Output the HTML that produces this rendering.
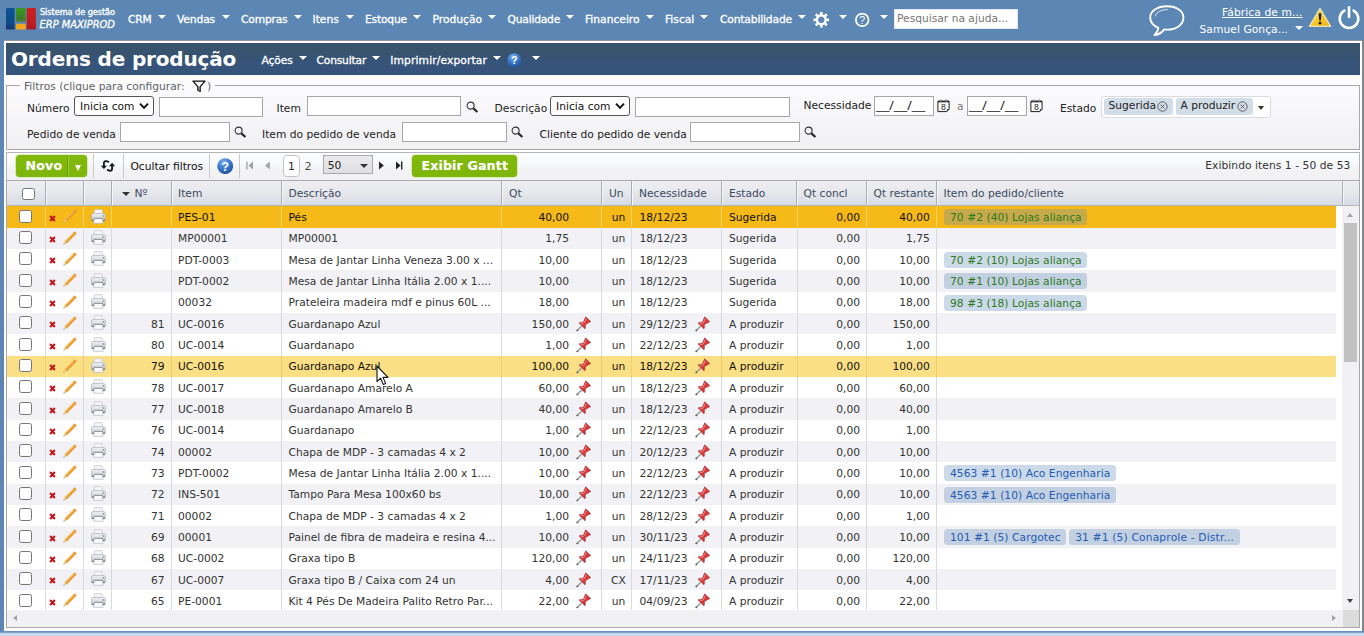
<!DOCTYPE html>
<html lang="pt-BR"><head><meta charset="utf-8"><title>Ordens de produção</title>
<style>
*{box-sizing:border-box;margin:0;padding:0}
html,body{width:1364px;height:636px;overflow:hidden}
body{position:relative;background:#5c87b5;font-family:"DejaVu Sans","Liberation Sans",sans-serif;font-size:10.7px;color:#333}
.abs{position:absolute}
.t{position:absolute;white-space:nowrap}
.cond{font-family:"DejaVu Sans Condensed","Liberation Sans",sans-serif}
#nav{position:absolute;left:0;top:0;width:1364px;height:40px;background:#5c87b5;color:#fff}
#nav .mi{-webkit-text-stroke:.3px #fff;position:absolute;top:.9px;line-height:38px;color:#fff;white-space:nowrap}
.arw{position:absolute;width:0;height:0;border-left:4.5px solid transparent;border-right:4.5px solid transparent;border-top:4.5px solid #fff}
#frame{position:absolute;left:4px;top:40px;width:1358px;height:591px;background:#fff;border-top:1px solid #8d95a2}
#edgeR{position:absolute;left:1362px;top:40px;width:2px;height:596px;background:#80868c}
#bottom{position:absolute;left:0;top:631px;width:1364px;height:5px;background:linear-gradient(#5c87b5 0,#7fa2c9 30%,#c6d7ec 50%,#c9daee 100%)}
#title{position:absolute;left:6px;top:43px;width:1354px;height:32px;background:linear-gradient(#38526b 0,#37536f 35%,#36537a 60%,#36547b 100%);color:#fff}
#title h1{position:absolute;left:5px;top:0;font-family:"DejaVu Sans","Liberation Sans",sans-serif;font-weight:bold;font-size:20px;line-height:32px;letter-spacing:-0.18px;white-space:nowrap}
#title .mi{-webkit-text-stroke:.3px #fff;position:absolute;top:1.8px;line-height:32px;white-space:nowrap}
#filters{position:absolute;left:6px;top:75px;width:1354px;height:75px;background:linear-gradient(#fdfdfe 0,#f8f8fa 40%,#f0f0f3 100%)}
#fs{position:absolute;left:0;top:10px;width:1354px;height:65px;border:1px solid #a9a9ad}
#legend{position:absolute;left:14px;top:4px;height:14px;width:195px;background:#fbfbfc}
.lbl{position:absolute;white-space:nowrap;line-height:16px;color:#222}
.inp{position:absolute;background:#fff;border:1px solid #a6a6a6;height:20px}
.sel{position:absolute;background:#fff;border:1px solid #555;border-radius:3px;height:20px;width:80px;line-height:19px;padding-left:5px;color:#111}
#toolbar{position:absolute;left:6px;top:152px;width:1354px;height:28px;background:linear-gradient(#fcfdfe 0,#f9fafb 35%,#f3f3f5 60%,#f1f1f3 100%);border-top:1px solid #b5b5b8;border-left:1px solid #b5b5b8;border-right:1px solid #b5b5b8}
.sep{position:absolute;top:1px;width:1px;height:24px;background:#c9c9cc}
.gbtn{position:absolute;background:linear-gradient(#81ba0d,#7db609);border-radius:3.5px;box-shadow:0 0 0 .6px rgba(190,220,110,.8);color:#fff;font-family:"DejaVu Sans","Liberation Sans",sans-serif;font-weight:bold;font-size:12.6px;letter-spacing:.16px;line-height:21.4px;height:22.4px;text-shadow:0 0 1px rgba(255,255,255,.35)}
#grid{position:absolute;left:6px;top:181px;width:1354px;height:447px;border:1px solid #a9a9ad;border-top:none;background:#fff}
#ghead{position:absolute;left:6px;top:180px;width:1354px;height:26px;background:linear-gradient(#efeff2 0,#e7e8ec 45%,#d7dbe3 100%);border-top:1px solid #a9aaae;border-bottom:1px solid #b4b5ba;border-left:1px solid #a9a9ad;border-right:1px solid #a9a9ad;color:#3c4a5e}
#ghead .h{position:absolute;top:1px;line-height:23px;white-space:nowrap}
#ghead .vs{position:absolute;top:0;width:2px;height:24px;border-left:1px solid #abadb5;border-right:1px solid #f6f6f9}
#rows{position:absolute;left:7px;top:206px;width:1329px;height:404px;overflow:hidden}
.r{position:absolute;left:0;width:1329px;height:21.34px;line-height:21.33px}
.r{--sc:#d9dade;background-image:linear-gradient(var(--sc),var(--sc)),linear-gradient(var(--sc),var(--sc)),linear-gradient(var(--sc),var(--sc)),linear-gradient(var(--sc),var(--sc)),linear-gradient(var(--sc),var(--sc)),linear-gradient(var(--sc),var(--sc)),linear-gradient(var(--sc),var(--sc)),linear-gradient(var(--sc),var(--sc)),linear-gradient(var(--sc),var(--sc)),linear-gradient(var(--sc),var(--sc)),linear-gradient(var(--sc),var(--sc)),linear-gradient(var(--sc),var(--sc));background-size:1px 100%;background-repeat:no-repeat;background-position:38px 0,76px 0,104px 0,164px 0,274px 0,494px 0,594px 0,624px 0,714px 0,790px 0,859px 0,929px 0}
.r.on{--sc:#f9d662}
.r.hov{--sc:#efcf70}
.r.alt{background-color:#f2f2f6}
.r.on{background-color:#f5b918;color:#111}
.r.hov{background-color:#fadf85;color:#111}
.c{position:absolute;top:.6px;white-space:nowrap}
.ra{text-align:right}
.vl{position:absolute;top:206px;width:1px;height:404px;background:#d9dade}
.cb{position:absolute;left:11.6px;top:3.4px;width:13px;height:13px;border:1px solid #767676;border-radius:2.5px;background:#fff}
.chip{position:absolute;top:3px;height:16px;line-height:17px;border-radius:3.5px;background:rgba(96,136,183,.32);padding:0 5.5px 0 6px;letter-spacing:.05px}
.chip.g{color:#2c7a1e}
.chip.b{color:#235cb4}
.r svg{position:absolute}
#vscroll{position:absolute;left:1342px;top:206px;width:17px;height:404px;background:#f1f1f3}
#hscroll{position:absolute;left:7px;top:610px;width:1352px;height:17px;background:#f1f1f3}
</style></head>
<body>
<div id="nav">
<svg class="abs" style="left:6px;top:8px" width="30" height="22" viewBox="0 0 30 22"><defs><linearGradient id="lb" x1="0" y1="0" x2="0" y2="1"><stop offset="0" stop-color="#0a5592"/><stop offset=".7" stop-color="#0d4a86"/><stop offset="1" stop-color="#17366d"/></linearGradient><linearGradient id="lg" x1="0" y1="0" x2="0" y2="1"><stop offset="0" stop-color="#3a9a1c"/><stop offset=".5" stop-color="#3f8a26"/><stop offset="1" stop-color="#58792f"/></linearGradient><linearGradient id="lr" x1="0" y1="0" x2="0" y2="1"><stop offset="0" stop-color="#c8201f"/><stop offset=".8" stop-color="#bd1d1f"/><stop offset="1" stop-color="#a3191f"/></linearGradient></defs><rect x="0" y="0" width="8.6" height="21.6" rx="1.2" fill="url(#lb)"/><rect x="10" y="0" width="9.7" height="13.8" rx="1.2" fill="url(#lg)"/><rect x="11.5" y="7" width="5.5" height="5" fill="#2f7a2a" opacity=".6"/><rect x="10" y="15.8" width="9.7" height="5.8" rx="1" fill="#f0a71d"/><rect x="20.7" y="0" width="9.2" height="21.6" rx="1.2" fill="url(#lr)"/></svg>
<div class="t cond" style="left:40px;top:7px;font-size:9px;line-height:11px;color:#fff;-webkit-text-stroke:.35px #fff;letter-spacing:-.02px">Sistema de gestão</div>
<div class="t cond" style="left:39.5px;top:17.6px;font-size:11px;line-height:13px;font-style:italic;color:#fff;-webkit-text-stroke:.3px #fff">ERP MAXIPROD</div>
<div class="mi" style="left:128.0px;letter-spacing:-0.2px">CRM</div><i class="arw" style="left:158.2px;top:15px"></i>
<div class="mi" style="left:177.0px;letter-spacing:-0.12px">Vendas</div><i class="arw" style="left:221.7px;top:15px"></i>
<div class="mi" style="left:241.0px;letter-spacing:-0.17px">Compras</div><i class="arw" style="left:294.2px;top:15px"></i>
<div class="mi" style="left:312.5px">Itens</div><i class="arw" style="left:346.2px;top:15px"></i>
<div class="mi" style="left:365.0px;letter-spacing:-0.17px">Estoque</div><i class="arw" style="left:412.7px;top:15px"></i>
<div class="mi" style="left:432.5px">Produção</div><i class="arw" style="left:488.2px;top:15px"></i>
<div class="mi" style="left:507.5px;letter-spacing:-0.2px">Qualidade</div><i class="arw" style="left:566.2px;top:15px"></i>
<div class="mi" style="left:585.0px">Financeiro</div><i class="arw" style="left:646.2px;top:15px"></i>
<div class="mi" style="left:665.0px">Fiscal</div><i class="arw" style="left:700.2px;top:15px"></i>
<div class="mi" style="left:720.0px;letter-spacing:-0.15px">Contabilidade</div><i class="arw" style="left:798.2px;top:15px"></i>
<svg class="abs" style="left:813px;top:12px" width="17" height="16" viewBox="0 0 17 16"><path d="M6.94,0.02 L9.66,0.02 L9.61,2.35 L11.23,3.03 L12.84,1.34 L14.76,3.26 L13.07,4.87 L13.75,6.49 L16.08,6.44 L16.08,9.16 L13.75,9.11 L13.07,10.73 L14.76,12.34 L12.84,14.26 L11.23,12.57 L9.61,13.25 L9.66,15.58 L6.94,15.58 L6.99,13.25 L5.37,12.57 L3.76,14.26 L1.84,12.34 L3.53,10.73 L2.85,9.11 L0.52,9.16 L0.52,6.44 L2.85,6.49 L3.53,4.87 L1.84,3.26 L3.76,1.34 L5.37,3.03 L6.99,2.35Z M8.3,4.6 a3.2,3.2 0 1 0 0.001,0Z" fill="#fff" fill-rule="evenodd"/></svg><i class="arw" style="left:838.6px;top:15px"></i>
<svg class="abs" style="left:854px;top:12px" width="17" height="16" viewBox="0 0 17 16"><circle cx="8.2" cy="7.9" r="6.3" fill="none" stroke="#fff" stroke-width="1.7"/><text x="8.2" y="11.6" text-anchor="middle" font-family="Liberation Sans, sans-serif" font-size="10.5" fill="#fff">?</text></svg><i class="arw" style="left:879.5px;top:15px"></i>
<div class="abs" style="left:894px;top:9px;width:124px;height:20px;background:#fff;border:1px solid #e4e8ee;color:#767676;line-height:18px;padding-left:2px;white-space:nowrap">Pesquisar na ajuda...</div>
<svg class="abs" style="left:1147px;top:3px" width="40" height="36" viewBox="0 0 40 36"><path d="M20,3.2 C10.2,3.2 3.2,8 3.2,14.6 C3.2,19.2 6.4,22.9 11.4,24.8 C11.1,27.5 9.6,30 7.4,32.2 C11.8,31.6 15.2,29.4 17.2,26.4 C18.1,26.5 19,26.6 20,26.6 C29.8,26.6 36.4,21.4 36.4,14.6 C36.4,8 29.8,3.2 20,3.2Z" fill="none" stroke="#fff" stroke-width="1.9" stroke-linejoin="round"/><path d="M8.2,13.2 C9.6,9 14.6,6.6 20.6,6.6" fill="none" stroke="#fff" stroke-width="1" opacity=".85"/></svg>
<div class="t" style="left:1222px;top:4.5px;line-height:15px;color:#fff;text-decoration:underline;letter-spacing:.1px">Fábrica de m...</div>
<div class="t" style="left:1199.5px;top:22px;line-height:15px;color:#fff;letter-spacing:.06px">Samuel Gonça...</div>
<i class="arw" style="left:1295px;top:25.5px;border-left-width:4px;border-right-width:4px"></i>
<svg class="abs" style="left:1308px;top:7px" width="24" height="21" viewBox="0 0 24 21"><defs><linearGradient id="wg" x1="0" y1="0" x2="1" y2="1"><stop offset="0" stop-color="#ffe24a"/><stop offset="1" stop-color="#f2b20c"/></linearGradient></defs><path d="M12,1.4 L22.6,19.4 L1.4,19.4Z" fill="url(#wg)" stroke="#e9e0c0" stroke-width="1.3" stroke-linejoin="round"/><path d="M10.7,6.2 h2.6 l-.5,7.2 h-1.6Z" fill="#1c1c1c"/><circle cx="12" cy="16.1" r="1.5" fill="#1c1c1c"/></svg>
<svg class="abs" style="left:1337px;top:5px" width="24" height="25" viewBox="0 0 24 25"><path d="M7.4,5.6 A9.3,9.3 0 1 0 16.6,5.6" fill="none" stroke="#fff" stroke-width="2.6" stroke-linecap="round"/><path d="M12,2.2 V12" stroke="#fff" stroke-width="2.6" stroke-linecap="round"/></svg>
</div>
<div id="frame"></div><div id="edgeR"></div><div id="bottom"></div>
<div id="title"><h1>Ordens de produção</h1>
<div class="mi" style="left:255.5px;letter-spacing:-0.07px">Ações</div><i class="arw" style="left:292.5px;top:13px"></i>
<div class="mi" style="left:310.5px;letter-spacing:-0.18px">Consultar</div><i class="arw" style="left:366.4px;top:13px"></i>
<div class="mi" style="left:384.3px;letter-spacing:0.12px">Imprimir/exportar</div><i class="arw" style="left:486.7px;top:13px"></i>
<div class="abs" style="left:500.8px;top:10.2px;width:15px;height:15px"><svg width="14.6" height="14.6" viewBox="0 0 16 16"><defs><radialGradient id="hs1" cx=".4" cy=".25" r=".8"><stop offset="0" stop-color="#7fb2ee"/><stop offset=".45" stop-color="#3f7fd0"/><stop offset="1" stop-color="#1b4f9e"/></radialGradient></defs><circle cx="8" cy="8" r="7.7" fill="url(#hs1)"/><text x="8" y="12.3" text-anchor="middle" font-family="Liberation Sans, sans-serif" font-weight="bold" font-size="12" fill="#fff">?</text></svg></div><i class="arw" style="left:525.7px;top:13px"></i>
</div>
<div id="filters"><div id="fs"></div>
<div id="legend"></div><div class="lbl" style="left:18px;top:3.6px;color:#5f6368">Filtros (clique para configurar:</div><svg class="abs" style="left:185.5px;top:4.5px" width="14" height="13" viewBox="0 0 14 13"><path d="M1,1.1 H13 L8.2,6.6 V11.4 L5.8,10.2 V6.6Z" fill="none" stroke="#111" stroke-width="1.3" stroke-linejoin="round"/><path d="M5.9,6.8 H8.1 V11.2 L5.9,10.1Z" fill="#777"/></svg><div class="lbl" style="left:201px;top:3.6px;color:#5f6368">)</div>
<div class="lbl" style="left:21px;top:25.599999999999994px">Número</div><div class="sel" style="left:68px;top:21px">Inicia com<svg class="abs" style="right:4px;top:5px" width="10" height="8" viewBox="0 0 10 8"><path d="M1,1.6 L5,5.8 L9,1.6" fill="none" stroke="#111" stroke-width="1.9"/></svg></div><div class="inp" style="left:153px;top:22px;width:104px;height:20px"></div><div class="lbl" style="left:270.5px;top:25.599999999999994px">Item</div><div class="inp" style="left:301px;top:21px;width:154px;height:20px"></div><svg class="abs" style="left:459.6px;top:25.799999999999997px" width="13" height="13" viewBox="0 0 13 13"><circle cx="4.6" cy="4.6" r="3.5" fill="none" stroke="#333" stroke-width="1.1"/><path d="M7.4,7.4 L11.4,11" stroke="#222" stroke-width="2.1" stroke-linecap="butt"/></svg><div class="lbl" style="left:488.6px;top:25.599999999999994px">Descrição</div><div class="sel" style="left:544px;top:21px">Inicia com<svg class="abs" style="right:4px;top:5px" width="10" height="8" viewBox="0 0 10 8"><path d="M1,1.6 L5,5.8 L9,1.6" fill="none" stroke="#111" stroke-width="1.9"/></svg></div><div class="inp" style="left:629px;top:22px;width:155px;height:20px"></div><div class="lbl" style="left:797.5px;top:22.599999999999994px">Necessidade</div><div class="inp" style="left:868px;top:21px;width:60px;height:20px"></div><div class="lbl" style="left:870.4px;top:23px;transform:scaleX(1.25);transform-origin:0 0">__/__/__</div><svg class="abs" style="left:931px;top:24.4px" width="13" height="14" viewBox="0 0 13 14"><path d="M.9,2.4 H12.1 V10.2 L9.8,12.6 H.9Z" fill="#fff" stroke="#1f1f1f" stroke-width="1"/><path d="M.9,2.5 H12.1" stroke="#1f1f1f" stroke-width="1.6"/><circle cx="3.8" cy="1.9" r=".95" fill="#fff" stroke="#1f1f1f" stroke-width=".6"/><circle cx="9.2" cy="1.9" r=".95" fill="#fff" stroke="#1f1f1f" stroke-width=".6"/><path d="M9.8,12.6 V10.2 H12.1Z" fill="#1f1f1f"/><text x="6.4" y="10.7" text-anchor="middle" font-family="Liberation Sans, sans-serif" font-size="8.6" fill="#222">8</text></svg><div class="lbl" style="left:951px;top:23.599999999999994px;color:#777">a</div><div class="inp" style="left:961px;top:21px;width:60px;height:20px"></div><div class="lbl" style="left:962.8px;top:23px;transform:scaleX(1.25);transform-origin:0 0">__/__/__</div><svg class="abs" style="left:1023.5999999999999px;top:24.4px" width="13" height="14" viewBox="0 0 13 14"><path d="M.9,2.4 H12.1 V10.2 L9.8,12.6 H.9Z" fill="#fff" stroke="#1f1f1f" stroke-width="1"/><path d="M.9,2.5 H12.1" stroke="#1f1f1f" stroke-width="1.6"/><circle cx="3.8" cy="1.9" r=".95" fill="#fff" stroke="#1f1f1f" stroke-width=".6"/><circle cx="9.2" cy="1.9" r=".95" fill="#fff" stroke="#1f1f1f" stroke-width=".6"/><path d="M9.8,12.6 V10.2 H12.1Z" fill="#1f1f1f"/><text x="6.4" y="10.7" text-anchor="middle" font-family="Liberation Sans, sans-serif" font-size="8.6" fill="#222">8</text></svg><div class="lbl" style="left:1054px;top:25.599999999999994px">Estado</div><div class="abs" style="left:1094.5px;top:20.5px;width:170px;height:22px;background:#fff;border:1px solid #dadbe0;border-radius:3px"></div><div class="abs" style="left:1097.5px;top:23px;width:69.0px;height:16.5px;background:#d3dde8;border-radius:3px;line-height:16px;padding-left:5px;white-space:nowrap;color:#222">Sugerida<svg class="abs" style="right:4.5px;top:2.6px" width="11" height="11" viewBox="0 0 11 11"><circle cx="5.5" cy="5.5" r="4.7" fill="none" stroke="#555" stroke-width=".9"/><path d="M3.6,3.6 L7.4,7.4 M7.4,3.6 L3.6,7.4" stroke="#555" stroke-width=".9"/></svg></div><div class="abs" style="left:1169.5px;top:23px;width:77.0px;height:16.5px;background:#d3dde8;border-radius:3px;line-height:16px;padding-left:5px;white-space:nowrap;color:#222">A produzir<svg class="abs" style="right:4.5px;top:2.6px" width="11" height="11" viewBox="0 0 11 11"><circle cx="5.5" cy="5.5" r="4.7" fill="none" stroke="#555" stroke-width=".9"/><path d="M3.6,3.6 L7.4,7.4 M7.4,3.6 L3.6,7.4" stroke="#555" stroke-width=".9"/></svg></div><i class="arw" style="left:1252.3px;top:30.599999999999994px;border-left-width:3.5px;border-right-width:3.5px;border-top:4px solid #333"></i>
<div class="lbl" style="left:21px;top:51.599999999999994px">Pedido de venda</div><div class="inp" style="left:114px;top:47px;width:109.5px;height:20px"></div><svg class="abs" style="left:227.8px;top:50.8px" width="13" height="13" viewBox="0 0 13 13"><circle cx="4.6" cy="4.6" r="3.5" fill="none" stroke="#333" stroke-width="1.1"/><path d="M7.4,7.4 L11.4,11" stroke="#222" stroke-width="2.1" stroke-linecap="butt"/></svg><div class="lbl" style="left:256px;top:51.599999999999994px">Item do pedido de venda</div><div class="inp" style="left:396px;top:47px;width:105px;height:20px"></div><svg class="abs" style="left:505.3px;top:50.8px" width="13" height="13" viewBox="0 0 13 13"><circle cx="4.6" cy="4.6" r="3.5" fill="none" stroke="#333" stroke-width="1.1"/><path d="M7.4,7.4 L11.4,11" stroke="#222" stroke-width="2.1" stroke-linecap="butt"/></svg><div class="lbl" style="left:533.5px;top:51.599999999999994px">Cliente do pedido de venda</div><div class="inp" style="left:684px;top:47px;width:110px;height:20px"></div><svg class="abs" style="left:798.3px;top:50.8px" width="13" height="13" viewBox="0 0 13 13"><circle cx="4.6" cy="4.6" r="3.5" fill="none" stroke="#333" stroke-width="1.1"/><path d="M7.4,7.4 L11.4,11" stroke="#222" stroke-width="2.1" stroke-linecap="butt"/></svg></div>
<div id="toolbar">
<div class="gbtn" style="left:9px;top:2px;width:71px;padding-left:9.5px">Novo<i class="abs" style="left:51px;top:1px;width:1px;height:21px;background:rgba(60,110,0,.35)"></i><i class="abs" style="left:52px;top:1px;width:1px;height:21px;background:rgba(255,255,255,.25)"></i><i class="arw" style="left:58.5px;top:9.5px;border-left-width:3.2px;border-right-width:3.2px;border-top-width:6px"></i></div>
<i class="sep" style="left:86.19999999999999px"></i><i class="sep" style="left:116.1px"></i><i class="sep" style="left:202.0px"></i><i class="sep" style="left:231.79999999999998px"></i><svg class="abs" style="left:93px;top:7px" width="16" height="12" viewBox="0 0 16 12"><path d="M8.9,2.3 Q7.2,1 5.3,1.2 Q3.9,1.5 3.9,3.2 V6.4" fill="none" stroke="#1a1a1a" stroke-width="1.9"/><path d="M.8,5.7 H7 L3.9,9.1Z" fill="#1a1a1a"/><path d="M7.1,9.6 Q8.8,11 10.7,10.7 Q12.1,10.4 12.1,8.8 V5.6" fill="none" stroke="#1a1a1a" stroke-width="1.9"/><path d="M9,6.2 H15.2 L12.1,2.7Z" fill="#1a1a1a"/></svg><div class="t" style="left:123.4px;top:1px;line-height:26px;color:#111">Ocultar filtros</div><div class="abs" style="left:209.8px;top:4.6px;width:17px;height:17px"><svg width="16.4" height="16.4" viewBox="0 0 16 16"><defs><radialGradient id="hs2" cx=".4" cy=".25" r=".8"><stop offset="0" stop-color="#7fb2ee"/><stop offset=".45" stop-color="#3f7fd0"/><stop offset="1" stop-color="#1b4f9e"/></radialGradient></defs><circle cx="8" cy="8" r="7.7" fill="url(#hs2)"/><text x="8" y="12.3" text-anchor="middle" font-family="Liberation Sans, sans-serif" font-weight="bold" font-size="12" fill="#fff">?</text></svg></div>
<svg class="abs" style="left:238.6px;top:8.2px" width="8" height="9" viewBox="0 0 8 9"><path d="M.9,.5 V8.5" stroke="#a2a2a6" stroke-width="1.4"/><path d="M7,.5 V8.5 L2.4,4.5Z" fill="#a2a2a6"/></svg><svg class="abs" style="left:256.6px;top:8.2px" width="7" height="9" viewBox="0 0 7 9"><path d="M5.8,.5 V8.5 L1,4.5Z" fill="#a2a2a6"/></svg><div class="abs" style="left:276px;top:1.6px;width:16.6px;height:22px;border:1px solid #c4c4c8;border-radius:4px;background:#fff;text-align:center;line-height:21.6px;color:#222">1</div><div class="t" style="left:297.8px;top:1.2px;line-height:26.5px;color:#444">2</div><div class="abs" style="left:315.6px;top:2px;width:50.4px;height:19px;border:1px solid #a9a9ad;background:linear-gradient(#ebebed,#dfdfe2);line-height:20px;padding-left:4.2px;color:#222">50<i class="arw" style="left:36.6px;top:7.8px;border-left-width:4.3px;border-right-width:4.3px;border-top:4.4px solid #333"></i></div><svg class="abs" style="left:371.4px;top:8.2px" width="7" height="9" viewBox="0 0 7 9"><path d="M1,.5 V8.5 L5.8,4.5Z" fill="#222"/></svg><svg class="abs" style="left:388.4px;top:8.2px" width="8" height="9" viewBox="0 0 8 9"><path d="M1,.5 V8.5 L5.6,4.5Z" fill="#222"/><path d="M6.7,.5 V8.5" stroke="#222" stroke-width="1.4"/></svg><div class="gbtn" style="left:405.2px;top:2px;width:104.8px;padding-left:9.2px">Exibir Gantt</div>
<div class="t" style="right:8.6px;top:1px;line-height:24px;color:#333;letter-spacing:.06px">Exibindo itens 1 - 50 de 53</div>
</div>
<div id="grid"></div>
<div id="ghead">
<i class="vs" style="left:37.9px"></i><i class="vs" style="left:75.9px"></i><i class="vs" style="left:104.10000000000001px"></i><i class="vs" style="left:163.9px"></i><i class="vs" style="left:274.09999999999997px"></i><i class="vs" style="left:493.9px"></i><i class="vs" style="left:594.1px"></i><i class="vs" style="left:624.4px"></i><i class="vs" style="left:714.4px"></i><i class="vs" style="left:789.4px"></i><i class="vs" style="left:859.1px"></i><i class="vs" style="left:928.9px"></i><i class="vs" style="left:1335.0px"></i><i class="cb" style="left:15px;top:6.5px;width:12.5px;height:12.5px"></i><i class="arw" style="left:115px;top:11px;border-left-width:4px;border-right-width:4px;border-top:4.4px solid #333"></i><div class="h" style="left:127.5px">Nº</div><div class="h" style="left:171.0px">Item</div><div class="h" style="left:281.5px">Descrição</div><div class="h" style="left:502.0px">Qt</div><div class="h" style="left:602.0px">Un</div><div class="h" style="left:632.0px">Necessidade</div><div class="h" style="left:722.0px">Estado</div><div class="h" style="left:796.5px">Qt concl</div><div class="h" style="left:866.5px">Qt restante</div><div class="h" style="left:936.5px">Item do pedido/cliente</div></div>
<div id="rows">
<div class="r on" style="top:0.40px"><i class="cb"></i><svg style="left:42.3px;top:8.2px" width="7" height="7" viewBox="0 0 7 7"><path d="M1.1,1.1 L5.9,5.9 M5.9,1.1 L1.1,5.9" stroke="#c3161c" stroke-width="2.1"/></svg><svg style="left:55.7px;top:2.8px" width="14" height="14" viewBox="0 0 14 14"><path d="M.5,13.5 L1.6,10.4 L3.6,12.4Z" fill="#f3d9ad"/><path d="M.5,13.5 L.95,12.3 L1.7,13.05Z" fill="#333"/><path d="M1.6,10.4 L11.4,.6 L13.4,2.6 L3.6,12.4Z" fill="#f0a02e"/><path d="M2.1,10.6 L11.8,.9" stroke="#f8c877" stroke-width=".9"/><path d="M3.3,12 L13,2.3" stroke="#de8d22" stroke-width=".8"/><path d="M10.7,1.3 L11.4,.6 L13.4,2.6 L12.7,3.3Z" fill="#e58c3a"/></svg><svg style="left:83.8px;top:2.4px" width="15" height="15.4" viewBox="0 0 16 16" preserveAspectRatio="none"><defs><linearGradient id="pg0" x1="0" y1="0" x2="0" y2="1"><stop offset="0" stop-color="#f4f5f8"/><stop offset=".55" stop-color="#d6d9e0"/><stop offset="1" stop-color="#a9aeb8"/></linearGradient></defs><path d="M4,.6 H11.6 L12.6,5.2 H3Z" fill="#f4f4f7" stroke="#c2c5cc" stroke-width=".7"/><rect x=".6" y="4.8" width="14.6" height="7.6" rx="1.4" fill="url(#pg0)" stroke="#9da2ac" stroke-width=".6"/><rect x=".8" y="11" width="14.2" height="1.5" fill="#6f747d" opacity=".75"/><path d="M3.6,9.8 H12 L12.8,14.9 H2.8Z" fill="#fafafc" stroke="#b1b5bd" stroke-width=".7"/><rect x="3.2" y="9.2" width="9.4" height="1" fill="#8d929b"/><rect x="12.4" y="6.4" width="1.5" height="2.2" fill="#b7c04a"/><rect x="12.4" y="6.4" width="1.5" height="1" fill="#7aa6d6"/></svg><span class="c" style="left:171.0px">PES-01</span><span class="c" style="left:281.5px">Pés</span><span class="c ra" style="left:498px;width:64px">40,00</span><span class="c" style="left:596px;width:31px;text-align:center">un</span><span class="c" style="left:632.5px">18/12/23</span><span class="c" style="left:722.0px">Sugerida</span><span class="c ra" style="left:793px;width:60px">0,00</span><span class="c ra" style="left:863px;width:59.799999999999955px">40,00</span><span class="c" style="left:937px;top:0;height:21px;display:flex;gap:3px;align-items:flex-start"><span class="chip g" style="position:relative">70 #2 (40) Lojas aliança</span></span></div>
<div class="r alt" style="top:21.73px"><i class="cb"></i><svg style="left:42.3px;top:8.2px" width="7" height="7" viewBox="0 0 7 7"><path d="M1.1,1.1 L5.9,5.9 M5.9,1.1 L1.1,5.9" stroke="#c3161c" stroke-width="2.1"/></svg><svg style="left:55.7px;top:2.8px" width="14" height="14" viewBox="0 0 14 14"><path d="M.5,13.5 L1.6,10.4 L3.6,12.4Z" fill="#f3d9ad"/><path d="M.5,13.5 L.95,12.3 L1.7,13.05Z" fill="#333"/><path d="M1.6,10.4 L11.4,.6 L13.4,2.6 L3.6,12.4Z" fill="#f0a02e"/><path d="M2.1,10.6 L11.8,.9" stroke="#f8c877" stroke-width=".9"/><path d="M3.3,12 L13,2.3" stroke="#de8d22" stroke-width=".8"/><path d="M10.7,1.3 L11.4,.6 L13.4,2.6 L12.7,3.3Z" fill="#e58c3a"/></svg><svg style="left:83.8px;top:2.4px" width="15" height="15.4" viewBox="0 0 16 16" preserveAspectRatio="none"><defs><linearGradient id="pg1" x1="0" y1="0" x2="0" y2="1"><stop offset="0" stop-color="#f4f5f8"/><stop offset=".55" stop-color="#d6d9e0"/><stop offset="1" stop-color="#a9aeb8"/></linearGradient></defs><path d="M4,.6 H11.6 L12.6,5.2 H3Z" fill="#f4f4f7" stroke="#c2c5cc" stroke-width=".7"/><rect x=".6" y="4.8" width="14.6" height="7.6" rx="1.4" fill="url(#pg1)" stroke="#9da2ac" stroke-width=".6"/><rect x=".8" y="11" width="14.2" height="1.5" fill="#6f747d" opacity=".75"/><path d="M3.6,9.8 H12 L12.8,14.9 H2.8Z" fill="#fafafc" stroke="#b1b5bd" stroke-width=".7"/><rect x="3.2" y="9.2" width="9.4" height="1" fill="#8d929b"/><rect x="12.4" y="6.4" width="1.5" height="2.2" fill="#b7c04a"/><rect x="12.4" y="6.4" width="1.5" height="1" fill="#7aa6d6"/></svg><span class="c" style="left:171.0px">MP00001</span><span class="c" style="left:281.5px">MP00001</span><span class="c ra" style="left:498px;width:64px">1,75</span><span class="c" style="left:596px;width:31px;text-align:center">un</span><span class="c" style="left:632.5px">18/12/23</span><span class="c" style="left:722.0px">Sugerida</span><span class="c ra" style="left:793px;width:60px">0,00</span><span class="c ra" style="left:863px;width:59.799999999999955px">1,75</span></div>
<div class="r" style="top:43.07px"><i class="cb"></i><svg style="left:42.3px;top:8.2px" width="7" height="7" viewBox="0 0 7 7"><path d="M1.1,1.1 L5.9,5.9 M5.9,1.1 L1.1,5.9" stroke="#c3161c" stroke-width="2.1"/></svg><svg style="left:55.7px;top:2.8px" width="14" height="14" viewBox="0 0 14 14"><path d="M.5,13.5 L1.6,10.4 L3.6,12.4Z" fill="#f3d9ad"/><path d="M.5,13.5 L.95,12.3 L1.7,13.05Z" fill="#333"/><path d="M1.6,10.4 L11.4,.6 L13.4,2.6 L3.6,12.4Z" fill="#f0a02e"/><path d="M2.1,10.6 L11.8,.9" stroke="#f8c877" stroke-width=".9"/><path d="M3.3,12 L13,2.3" stroke="#de8d22" stroke-width=".8"/><path d="M10.7,1.3 L11.4,.6 L13.4,2.6 L12.7,3.3Z" fill="#e58c3a"/></svg><svg style="left:83.8px;top:2.4px" width="15" height="15.4" viewBox="0 0 16 16" preserveAspectRatio="none"><defs><linearGradient id="pg2" x1="0" y1="0" x2="0" y2="1"><stop offset="0" stop-color="#f4f5f8"/><stop offset=".55" stop-color="#d6d9e0"/><stop offset="1" stop-color="#a9aeb8"/></linearGradient></defs><path d="M4,.6 H11.6 L12.6,5.2 H3Z" fill="#f4f4f7" stroke="#c2c5cc" stroke-width=".7"/><rect x=".6" y="4.8" width="14.6" height="7.6" rx="1.4" fill="url(#pg2)" stroke="#9da2ac" stroke-width=".6"/><rect x=".8" y="11" width="14.2" height="1.5" fill="#6f747d" opacity=".75"/><path d="M3.6,9.8 H12 L12.8,14.9 H2.8Z" fill="#fafafc" stroke="#b1b5bd" stroke-width=".7"/><rect x="3.2" y="9.2" width="9.4" height="1" fill="#8d929b"/><rect x="12.4" y="6.4" width="1.5" height="2.2" fill="#b7c04a"/><rect x="12.4" y="6.4" width="1.5" height="1" fill="#7aa6d6"/></svg><span class="c" style="left:171.0px">PDT-0003</span><span class="c" style="left:281.5px">Mesa de Jantar Linha Veneza 3.00 x ...</span><span class="c ra" style="left:498px;width:64px">10,00</span><span class="c" style="left:596px;width:31px;text-align:center">un</span><span class="c" style="left:632.5px">18/12/23</span><span class="c" style="left:722.0px">Sugerida</span><span class="c ra" style="left:793px;width:60px">0,00</span><span class="c ra" style="left:863px;width:59.799999999999955px">10,00</span><span class="c" style="left:937px;top:0;height:21px;display:flex;gap:3px;align-items:flex-start"><span class="chip g" style="position:relative">70 #2 (10) Lojas aliança</span></span></div>
<div class="r alt" style="top:64.40px"><i class="cb"></i><svg style="left:42.3px;top:8.2px" width="7" height="7" viewBox="0 0 7 7"><path d="M1.1,1.1 L5.9,5.9 M5.9,1.1 L1.1,5.9" stroke="#c3161c" stroke-width="2.1"/></svg><svg style="left:55.7px;top:2.8px" width="14" height="14" viewBox="0 0 14 14"><path d="M.5,13.5 L1.6,10.4 L3.6,12.4Z" fill="#f3d9ad"/><path d="M.5,13.5 L.95,12.3 L1.7,13.05Z" fill="#333"/><path d="M1.6,10.4 L11.4,.6 L13.4,2.6 L3.6,12.4Z" fill="#f0a02e"/><path d="M2.1,10.6 L11.8,.9" stroke="#f8c877" stroke-width=".9"/><path d="M3.3,12 L13,2.3" stroke="#de8d22" stroke-width=".8"/><path d="M10.7,1.3 L11.4,.6 L13.4,2.6 L12.7,3.3Z" fill="#e58c3a"/></svg><svg style="left:83.8px;top:2.4px" width="15" height="15.4" viewBox="0 0 16 16" preserveAspectRatio="none"><defs><linearGradient id="pg3" x1="0" y1="0" x2="0" y2="1"><stop offset="0" stop-color="#f4f5f8"/><stop offset=".55" stop-color="#d6d9e0"/><stop offset="1" stop-color="#a9aeb8"/></linearGradient></defs><path d="M4,.6 H11.6 L12.6,5.2 H3Z" fill="#f4f4f7" stroke="#c2c5cc" stroke-width=".7"/><rect x=".6" y="4.8" width="14.6" height="7.6" rx="1.4" fill="url(#pg3)" stroke="#9da2ac" stroke-width=".6"/><rect x=".8" y="11" width="14.2" height="1.5" fill="#6f747d" opacity=".75"/><path d="M3.6,9.8 H12 L12.8,14.9 H2.8Z" fill="#fafafc" stroke="#b1b5bd" stroke-width=".7"/><rect x="3.2" y="9.2" width="9.4" height="1" fill="#8d929b"/><rect x="12.4" y="6.4" width="1.5" height="2.2" fill="#b7c04a"/><rect x="12.4" y="6.4" width="1.5" height="1" fill="#7aa6d6"/></svg><span class="c" style="left:171.0px">PDT-0002</span><span class="c" style="left:281.5px">Mesa de Jantar Linha Itália 2.00 x 1....</span><span class="c ra" style="left:498px;width:64px">10,00</span><span class="c" style="left:596px;width:31px;text-align:center">un</span><span class="c" style="left:632.5px">18/12/23</span><span class="c" style="left:722.0px">Sugerida</span><span class="c ra" style="left:793px;width:60px">0,00</span><span class="c ra" style="left:863px;width:59.799999999999955px">10,00</span><span class="c" style="left:937px;top:0;height:21px;display:flex;gap:3px;align-items:flex-start"><span class="chip g" style="position:relative">70 #1 (10) Lojas aliança</span></span></div>
<div class="r" style="top:85.73px"><i class="cb"></i><svg style="left:42.3px;top:8.2px" width="7" height="7" viewBox="0 0 7 7"><path d="M1.1,1.1 L5.9,5.9 M5.9,1.1 L1.1,5.9" stroke="#c3161c" stroke-width="2.1"/></svg><svg style="left:55.7px;top:2.8px" width="14" height="14" viewBox="0 0 14 14"><path d="M.5,13.5 L1.6,10.4 L3.6,12.4Z" fill="#f3d9ad"/><path d="M.5,13.5 L.95,12.3 L1.7,13.05Z" fill="#333"/><path d="M1.6,10.4 L11.4,.6 L13.4,2.6 L3.6,12.4Z" fill="#f0a02e"/><path d="M2.1,10.6 L11.8,.9" stroke="#f8c877" stroke-width=".9"/><path d="M3.3,12 L13,2.3" stroke="#de8d22" stroke-width=".8"/><path d="M10.7,1.3 L11.4,.6 L13.4,2.6 L12.7,3.3Z" fill="#e58c3a"/></svg><svg style="left:83.8px;top:2.4px" width="15" height="15.4" viewBox="0 0 16 16" preserveAspectRatio="none"><defs><linearGradient id="pg4" x1="0" y1="0" x2="0" y2="1"><stop offset="0" stop-color="#f4f5f8"/><stop offset=".55" stop-color="#d6d9e0"/><stop offset="1" stop-color="#a9aeb8"/></linearGradient></defs><path d="M4,.6 H11.6 L12.6,5.2 H3Z" fill="#f4f4f7" stroke="#c2c5cc" stroke-width=".7"/><rect x=".6" y="4.8" width="14.6" height="7.6" rx="1.4" fill="url(#pg4)" stroke="#9da2ac" stroke-width=".6"/><rect x=".8" y="11" width="14.2" height="1.5" fill="#6f747d" opacity=".75"/><path d="M3.6,9.8 H12 L12.8,14.9 H2.8Z" fill="#fafafc" stroke="#b1b5bd" stroke-width=".7"/><rect x="3.2" y="9.2" width="9.4" height="1" fill="#8d929b"/><rect x="12.4" y="6.4" width="1.5" height="2.2" fill="#b7c04a"/><rect x="12.4" y="6.4" width="1.5" height="1" fill="#7aa6d6"/></svg><span class="c" style="left:171.0px">00032</span><span class="c" style="left:281.5px">Prateleira madeira mdf e pinus 60L ...</span><span class="c ra" style="left:498px;width:64px">18,00</span><span class="c" style="left:596px;width:31px;text-align:center">un</span><span class="c" style="left:632.5px">18/12/23</span><span class="c" style="left:722.0px">Sugerida</span><span class="c ra" style="left:793px;width:60px">0,00</span><span class="c ra" style="left:863px;width:59.799999999999955px">18,00</span><span class="c" style="left:937px;top:0;height:21px;display:flex;gap:3px;align-items:flex-start"><span class="chip g" style="position:relative">98 #3 (18) Lojas aliança</span></span></div>
<div class="r alt" style="top:107.07px"><i class="cb"></i><svg style="left:42.3px;top:8.2px" width="7" height="7" viewBox="0 0 7 7"><path d="M1.1,1.1 L5.9,5.9 M5.9,1.1 L1.1,5.9" stroke="#c3161c" stroke-width="2.1"/></svg><svg style="left:55.7px;top:2.8px" width="14" height="14" viewBox="0 0 14 14"><path d="M.5,13.5 L1.6,10.4 L3.6,12.4Z" fill="#f3d9ad"/><path d="M.5,13.5 L.95,12.3 L1.7,13.05Z" fill="#333"/><path d="M1.6,10.4 L11.4,.6 L13.4,2.6 L3.6,12.4Z" fill="#f0a02e"/><path d="M2.1,10.6 L11.8,.9" stroke="#f8c877" stroke-width=".9"/><path d="M3.3,12 L13,2.3" stroke="#de8d22" stroke-width=".8"/><path d="M10.7,1.3 L11.4,.6 L13.4,2.6 L12.7,3.3Z" fill="#e58c3a"/></svg><svg style="left:83.8px;top:2.4px" width="15" height="15.4" viewBox="0 0 16 16" preserveAspectRatio="none"><defs><linearGradient id="pg5" x1="0" y1="0" x2="0" y2="1"><stop offset="0" stop-color="#f4f5f8"/><stop offset=".55" stop-color="#d6d9e0"/><stop offset="1" stop-color="#a9aeb8"/></linearGradient></defs><path d="M4,.6 H11.6 L12.6,5.2 H3Z" fill="#f4f4f7" stroke="#c2c5cc" stroke-width=".7"/><rect x=".6" y="4.8" width="14.6" height="7.6" rx="1.4" fill="url(#pg5)" stroke="#9da2ac" stroke-width=".6"/><rect x=".8" y="11" width="14.2" height="1.5" fill="#6f747d" opacity=".75"/><path d="M3.6,9.8 H12 L12.8,14.9 H2.8Z" fill="#fafafc" stroke="#b1b5bd" stroke-width=".7"/><rect x="3.2" y="9.2" width="9.4" height="1" fill="#8d929b"/><rect x="12.4" y="6.4" width="1.5" height="2.2" fill="#b7c04a"/><rect x="12.4" y="6.4" width="1.5" height="1" fill="#7aa6d6"/></svg><span class="c ra" style="left:105px;width:52.5px">81</span><span class="c" style="left:171.0px">UC-0016</span><span class="c" style="left:281.5px">Guardanapo Azul</span><span class="c ra" style="left:498px;width:64px">150,00</span><svg style="left:569.2px;top:2.6px" width="16" height="16" viewBox="0 0 16 16"><path d="M.9,14.8 L5.6,10.2" stroke="#9b9b9b" stroke-width="1.5"/><path d="M.7,15 L1.9,13.8" stroke="#555" stroke-width="1.3"/><path d="M3.1,6.9 Q5.6,6.4 7.3,6.6 L9.7,.9 L14.6,5.6 L9.2,8.4 Q9.6,10.4 9,12.7Z" fill="#dc3a3c" stroke="#a81f22" stroke-width=".7" stroke-linejoin="round"/><path d="M4.6,7.6 Q6.4,7.1 7.9,7.4 L10.2,2.6" fill="none" stroke="#f08a8a" stroke-width="1"/></svg><span class="c" style="left:596px;width:31px;text-align:center">un</span><span class="c" style="left:632.5px">29/12/23</span><svg style="left:688.2px;top:2.6px" width="16" height="16" viewBox="0 0 16 16"><path d="M.9,14.8 L5.6,10.2" stroke="#9b9b9b" stroke-width="1.5"/><path d="M.7,15 L1.9,13.8" stroke="#555" stroke-width="1.3"/><path d="M3.1,6.9 Q5.6,6.4 7.3,6.6 L9.7,.9 L14.6,5.6 L9.2,8.4 Q9.6,10.4 9,12.7Z" fill="#dc3a3c" stroke="#a81f22" stroke-width=".7" stroke-linejoin="round"/><path d="M4.6,7.6 Q6.4,7.1 7.9,7.4 L10.2,2.6" fill="none" stroke="#f08a8a" stroke-width="1"/></svg><span class="c" style="left:722.0px">A produzir</span><span class="c ra" style="left:793px;width:60px">0,00</span><span class="c ra" style="left:863px;width:59.799999999999955px">150,00</span></div>
<div class="r" style="top:128.40px"><i class="cb"></i><svg style="left:42.3px;top:8.2px" width="7" height="7" viewBox="0 0 7 7"><path d="M1.1,1.1 L5.9,5.9 M5.9,1.1 L1.1,5.9" stroke="#c3161c" stroke-width="2.1"/></svg><svg style="left:55.7px;top:2.8px" width="14" height="14" viewBox="0 0 14 14"><path d="M.5,13.5 L1.6,10.4 L3.6,12.4Z" fill="#f3d9ad"/><path d="M.5,13.5 L.95,12.3 L1.7,13.05Z" fill="#333"/><path d="M1.6,10.4 L11.4,.6 L13.4,2.6 L3.6,12.4Z" fill="#f0a02e"/><path d="M2.1,10.6 L11.8,.9" stroke="#f8c877" stroke-width=".9"/><path d="M3.3,12 L13,2.3" stroke="#de8d22" stroke-width=".8"/><path d="M10.7,1.3 L11.4,.6 L13.4,2.6 L12.7,3.3Z" fill="#e58c3a"/></svg><svg style="left:83.8px;top:2.4px" width="15" height="15.4" viewBox="0 0 16 16" preserveAspectRatio="none"><defs><linearGradient id="pg6" x1="0" y1="0" x2="0" y2="1"><stop offset="0" stop-color="#f4f5f8"/><stop offset=".55" stop-color="#d6d9e0"/><stop offset="1" stop-color="#a9aeb8"/></linearGradient></defs><path d="M4,.6 H11.6 L12.6,5.2 H3Z" fill="#f4f4f7" stroke="#c2c5cc" stroke-width=".7"/><rect x=".6" y="4.8" width="14.6" height="7.6" rx="1.4" fill="url(#pg6)" stroke="#9da2ac" stroke-width=".6"/><rect x=".8" y="11" width="14.2" height="1.5" fill="#6f747d" opacity=".75"/><path d="M3.6,9.8 H12 L12.8,14.9 H2.8Z" fill="#fafafc" stroke="#b1b5bd" stroke-width=".7"/><rect x="3.2" y="9.2" width="9.4" height="1" fill="#8d929b"/><rect x="12.4" y="6.4" width="1.5" height="2.2" fill="#b7c04a"/><rect x="12.4" y="6.4" width="1.5" height="1" fill="#7aa6d6"/></svg><span class="c ra" style="left:105px;width:52.5px">80</span><span class="c" style="left:171.0px">UC-0014</span><span class="c" style="left:281.5px">Guardanapo</span><span class="c ra" style="left:498px;width:64px">1,00</span><svg style="left:569.2px;top:2.6px" width="16" height="16" viewBox="0 0 16 16"><path d="M.9,14.8 L5.6,10.2" stroke="#9b9b9b" stroke-width="1.5"/><path d="M.7,15 L1.9,13.8" stroke="#555" stroke-width="1.3"/><path d="M3.1,6.9 Q5.6,6.4 7.3,6.6 L9.7,.9 L14.6,5.6 L9.2,8.4 Q9.6,10.4 9,12.7Z" fill="#dc3a3c" stroke="#a81f22" stroke-width=".7" stroke-linejoin="round"/><path d="M4.6,7.6 Q6.4,7.1 7.9,7.4 L10.2,2.6" fill="none" stroke="#f08a8a" stroke-width="1"/></svg><span class="c" style="left:596px;width:31px;text-align:center">un</span><span class="c" style="left:632.5px">22/12/23</span><svg style="left:688.2px;top:2.6px" width="16" height="16" viewBox="0 0 16 16"><path d="M.9,14.8 L5.6,10.2" stroke="#9b9b9b" stroke-width="1.5"/><path d="M.7,15 L1.9,13.8" stroke="#555" stroke-width="1.3"/><path d="M3.1,6.9 Q5.6,6.4 7.3,6.6 L9.7,.9 L14.6,5.6 L9.2,8.4 Q9.6,10.4 9,12.7Z" fill="#dc3a3c" stroke="#a81f22" stroke-width=".7" stroke-linejoin="round"/><path d="M4.6,7.6 Q6.4,7.1 7.9,7.4 L10.2,2.6" fill="none" stroke="#f08a8a" stroke-width="1"/></svg><span class="c" style="left:722.0px">A produzir</span><span class="c ra" style="left:793px;width:60px">0,00</span><span class="c ra" style="left:863px;width:59.799999999999955px">1,00</span></div>
<div class="r hov" style="top:149.73px"><i class="cb"></i><svg style="left:42.3px;top:8.2px" width="7" height="7" viewBox="0 0 7 7"><path d="M1.1,1.1 L5.9,5.9 M5.9,1.1 L1.1,5.9" stroke="#c3161c" stroke-width="2.1"/></svg><svg style="left:55.7px;top:2.8px" width="14" height="14" viewBox="0 0 14 14"><path d="M.5,13.5 L1.6,10.4 L3.6,12.4Z" fill="#f3d9ad"/><path d="M.5,13.5 L.95,12.3 L1.7,13.05Z" fill="#333"/><path d="M1.6,10.4 L11.4,.6 L13.4,2.6 L3.6,12.4Z" fill="#f0a02e"/><path d="M2.1,10.6 L11.8,.9" stroke="#f8c877" stroke-width=".9"/><path d="M3.3,12 L13,2.3" stroke="#de8d22" stroke-width=".8"/><path d="M10.7,1.3 L11.4,.6 L13.4,2.6 L12.7,3.3Z" fill="#e58c3a"/></svg><svg style="left:83.8px;top:2.4px" width="15" height="15.4" viewBox="0 0 16 16" preserveAspectRatio="none"><defs><linearGradient id="pg7" x1="0" y1="0" x2="0" y2="1"><stop offset="0" stop-color="#f4f5f8"/><stop offset=".55" stop-color="#d6d9e0"/><stop offset="1" stop-color="#a9aeb8"/></linearGradient></defs><path d="M4,.6 H11.6 L12.6,5.2 H3Z" fill="#f4f4f7" stroke="#c2c5cc" stroke-width=".7"/><rect x=".6" y="4.8" width="14.6" height="7.6" rx="1.4" fill="url(#pg7)" stroke="#9da2ac" stroke-width=".6"/><rect x=".8" y="11" width="14.2" height="1.5" fill="#6f747d" opacity=".75"/><path d="M3.6,9.8 H12 L12.8,14.9 H2.8Z" fill="#fafafc" stroke="#b1b5bd" stroke-width=".7"/><rect x="3.2" y="9.2" width="9.4" height="1" fill="#8d929b"/><rect x="12.4" y="6.4" width="1.5" height="2.2" fill="#b7c04a"/><rect x="12.4" y="6.4" width="1.5" height="1" fill="#7aa6d6"/></svg><span class="c ra" style="left:105px;width:52.5px">79</span><span class="c" style="left:171.0px">UC-0016</span><span class="c" style="left:281.5px">Guardanapo Azul</span><span class="c ra" style="left:498px;width:64px">100,00</span><svg style="left:569.2px;top:2.6px" width="16" height="16" viewBox="0 0 16 16"><path d="M.9,14.8 L5.6,10.2" stroke="#9b9b9b" stroke-width="1.5"/><path d="M.7,15 L1.9,13.8" stroke="#555" stroke-width="1.3"/><path d="M3.1,6.9 Q5.6,6.4 7.3,6.6 L9.7,.9 L14.6,5.6 L9.2,8.4 Q9.6,10.4 9,12.7Z" fill="#dc3a3c" stroke="#a81f22" stroke-width=".7" stroke-linejoin="round"/><path d="M4.6,7.6 Q6.4,7.1 7.9,7.4 L10.2,2.6" fill="none" stroke="#f08a8a" stroke-width="1"/></svg><span class="c" style="left:596px;width:31px;text-align:center">un</span><span class="c" style="left:632.5px">18/12/23</span><svg style="left:688.2px;top:2.6px" width="16" height="16" viewBox="0 0 16 16"><path d="M.9,14.8 L5.6,10.2" stroke="#9b9b9b" stroke-width="1.5"/><path d="M.7,15 L1.9,13.8" stroke="#555" stroke-width="1.3"/><path d="M3.1,6.9 Q5.6,6.4 7.3,6.6 L9.7,.9 L14.6,5.6 L9.2,8.4 Q9.6,10.4 9,12.7Z" fill="#dc3a3c" stroke="#a81f22" stroke-width=".7" stroke-linejoin="round"/><path d="M4.6,7.6 Q6.4,7.1 7.9,7.4 L10.2,2.6" fill="none" stroke="#f08a8a" stroke-width="1"/></svg><span class="c" style="left:722.0px">A produzir</span><span class="c ra" style="left:793px;width:60px">0,00</span><span class="c ra" style="left:863px;width:59.799999999999955px">100,00</span></div>
<div class="r" style="top:171.07px"><i class="cb"></i><svg style="left:42.3px;top:8.2px" width="7" height="7" viewBox="0 0 7 7"><path d="M1.1,1.1 L5.9,5.9 M5.9,1.1 L1.1,5.9" stroke="#c3161c" stroke-width="2.1"/></svg><svg style="left:55.7px;top:2.8px" width="14" height="14" viewBox="0 0 14 14"><path d="M.5,13.5 L1.6,10.4 L3.6,12.4Z" fill="#f3d9ad"/><path d="M.5,13.5 L.95,12.3 L1.7,13.05Z" fill="#333"/><path d="M1.6,10.4 L11.4,.6 L13.4,2.6 L3.6,12.4Z" fill="#f0a02e"/><path d="M2.1,10.6 L11.8,.9" stroke="#f8c877" stroke-width=".9"/><path d="M3.3,12 L13,2.3" stroke="#de8d22" stroke-width=".8"/><path d="M10.7,1.3 L11.4,.6 L13.4,2.6 L12.7,3.3Z" fill="#e58c3a"/></svg><svg style="left:83.8px;top:2.4px" width="15" height="15.4" viewBox="0 0 16 16" preserveAspectRatio="none"><defs><linearGradient id="pg8" x1="0" y1="0" x2="0" y2="1"><stop offset="0" stop-color="#f4f5f8"/><stop offset=".55" stop-color="#d6d9e0"/><stop offset="1" stop-color="#a9aeb8"/></linearGradient></defs><path d="M4,.6 H11.6 L12.6,5.2 H3Z" fill="#f4f4f7" stroke="#c2c5cc" stroke-width=".7"/><rect x=".6" y="4.8" width="14.6" height="7.6" rx="1.4" fill="url(#pg8)" stroke="#9da2ac" stroke-width=".6"/><rect x=".8" y="11" width="14.2" height="1.5" fill="#6f747d" opacity=".75"/><path d="M3.6,9.8 H12 L12.8,14.9 H2.8Z" fill="#fafafc" stroke="#b1b5bd" stroke-width=".7"/><rect x="3.2" y="9.2" width="9.4" height="1" fill="#8d929b"/><rect x="12.4" y="6.4" width="1.5" height="2.2" fill="#b7c04a"/><rect x="12.4" y="6.4" width="1.5" height="1" fill="#7aa6d6"/></svg><span class="c ra" style="left:105px;width:52.5px">78</span><span class="c" style="left:171.0px">UC-0017</span><span class="c" style="left:281.5px">Guardanapo Amarelo A</span><span class="c ra" style="left:498px;width:64px">60,00</span><svg style="left:569.2px;top:2.6px" width="16" height="16" viewBox="0 0 16 16"><path d="M.9,14.8 L5.6,10.2" stroke="#9b9b9b" stroke-width="1.5"/><path d="M.7,15 L1.9,13.8" stroke="#555" stroke-width="1.3"/><path d="M3.1,6.9 Q5.6,6.4 7.3,6.6 L9.7,.9 L14.6,5.6 L9.2,8.4 Q9.6,10.4 9,12.7Z" fill="#dc3a3c" stroke="#a81f22" stroke-width=".7" stroke-linejoin="round"/><path d="M4.6,7.6 Q6.4,7.1 7.9,7.4 L10.2,2.6" fill="none" stroke="#f08a8a" stroke-width="1"/></svg><span class="c" style="left:596px;width:31px;text-align:center">un</span><span class="c" style="left:632.5px">18/12/23</span><svg style="left:688.2px;top:2.6px" width="16" height="16" viewBox="0 0 16 16"><path d="M.9,14.8 L5.6,10.2" stroke="#9b9b9b" stroke-width="1.5"/><path d="M.7,15 L1.9,13.8" stroke="#555" stroke-width="1.3"/><path d="M3.1,6.9 Q5.6,6.4 7.3,6.6 L9.7,.9 L14.6,5.6 L9.2,8.4 Q9.6,10.4 9,12.7Z" fill="#dc3a3c" stroke="#a81f22" stroke-width=".7" stroke-linejoin="round"/><path d="M4.6,7.6 Q6.4,7.1 7.9,7.4 L10.2,2.6" fill="none" stroke="#f08a8a" stroke-width="1"/></svg><span class="c" style="left:722.0px">A produzir</span><span class="c ra" style="left:793px;width:60px">0,00</span><span class="c ra" style="left:863px;width:59.799999999999955px">60,00</span></div>
<div class="r alt" style="top:192.40px"><i class="cb"></i><svg style="left:42.3px;top:8.2px" width="7" height="7" viewBox="0 0 7 7"><path d="M1.1,1.1 L5.9,5.9 M5.9,1.1 L1.1,5.9" stroke="#c3161c" stroke-width="2.1"/></svg><svg style="left:55.7px;top:2.8px" width="14" height="14" viewBox="0 0 14 14"><path d="M.5,13.5 L1.6,10.4 L3.6,12.4Z" fill="#f3d9ad"/><path d="M.5,13.5 L.95,12.3 L1.7,13.05Z" fill="#333"/><path d="M1.6,10.4 L11.4,.6 L13.4,2.6 L3.6,12.4Z" fill="#f0a02e"/><path d="M2.1,10.6 L11.8,.9" stroke="#f8c877" stroke-width=".9"/><path d="M3.3,12 L13,2.3" stroke="#de8d22" stroke-width=".8"/><path d="M10.7,1.3 L11.4,.6 L13.4,2.6 L12.7,3.3Z" fill="#e58c3a"/></svg><svg style="left:83.8px;top:2.4px" width="15" height="15.4" viewBox="0 0 16 16" preserveAspectRatio="none"><defs><linearGradient id="pg9" x1="0" y1="0" x2="0" y2="1"><stop offset="0" stop-color="#f4f5f8"/><stop offset=".55" stop-color="#d6d9e0"/><stop offset="1" stop-color="#a9aeb8"/></linearGradient></defs><path d="M4,.6 H11.6 L12.6,5.2 H3Z" fill="#f4f4f7" stroke="#c2c5cc" stroke-width=".7"/><rect x=".6" y="4.8" width="14.6" height="7.6" rx="1.4" fill="url(#pg9)" stroke="#9da2ac" stroke-width=".6"/><rect x=".8" y="11" width="14.2" height="1.5" fill="#6f747d" opacity=".75"/><path d="M3.6,9.8 H12 L12.8,14.9 H2.8Z" fill="#fafafc" stroke="#b1b5bd" stroke-width=".7"/><rect x="3.2" y="9.2" width="9.4" height="1" fill="#8d929b"/><rect x="12.4" y="6.4" width="1.5" height="2.2" fill="#b7c04a"/><rect x="12.4" y="6.4" width="1.5" height="1" fill="#7aa6d6"/></svg><span class="c ra" style="left:105px;width:52.5px">77</span><span class="c" style="left:171.0px">UC-0018</span><span class="c" style="left:281.5px">Guardanapo Amarelo B</span><span class="c ra" style="left:498px;width:64px">40,00</span><svg style="left:569.2px;top:2.6px" width="16" height="16" viewBox="0 0 16 16"><path d="M.9,14.8 L5.6,10.2" stroke="#9b9b9b" stroke-width="1.5"/><path d="M.7,15 L1.9,13.8" stroke="#555" stroke-width="1.3"/><path d="M3.1,6.9 Q5.6,6.4 7.3,6.6 L9.7,.9 L14.6,5.6 L9.2,8.4 Q9.6,10.4 9,12.7Z" fill="#dc3a3c" stroke="#a81f22" stroke-width=".7" stroke-linejoin="round"/><path d="M4.6,7.6 Q6.4,7.1 7.9,7.4 L10.2,2.6" fill="none" stroke="#f08a8a" stroke-width="1"/></svg><span class="c" style="left:596px;width:31px;text-align:center">un</span><span class="c" style="left:632.5px">18/12/23</span><svg style="left:688.2px;top:2.6px" width="16" height="16" viewBox="0 0 16 16"><path d="M.9,14.8 L5.6,10.2" stroke="#9b9b9b" stroke-width="1.5"/><path d="M.7,15 L1.9,13.8" stroke="#555" stroke-width="1.3"/><path d="M3.1,6.9 Q5.6,6.4 7.3,6.6 L9.7,.9 L14.6,5.6 L9.2,8.4 Q9.6,10.4 9,12.7Z" fill="#dc3a3c" stroke="#a81f22" stroke-width=".7" stroke-linejoin="round"/><path d="M4.6,7.6 Q6.4,7.1 7.9,7.4 L10.2,2.6" fill="none" stroke="#f08a8a" stroke-width="1"/></svg><span class="c" style="left:722.0px">A produzir</span><span class="c ra" style="left:793px;width:60px">0,00</span><span class="c ra" style="left:863px;width:59.799999999999955px">40,00</span></div>
<div class="r" style="top:213.73px"><i class="cb"></i><svg style="left:42.3px;top:8.2px" width="7" height="7" viewBox="0 0 7 7"><path d="M1.1,1.1 L5.9,5.9 M5.9,1.1 L1.1,5.9" stroke="#c3161c" stroke-width="2.1"/></svg><svg style="left:55.7px;top:2.8px" width="14" height="14" viewBox="0 0 14 14"><path d="M.5,13.5 L1.6,10.4 L3.6,12.4Z" fill="#f3d9ad"/><path d="M.5,13.5 L.95,12.3 L1.7,13.05Z" fill="#333"/><path d="M1.6,10.4 L11.4,.6 L13.4,2.6 L3.6,12.4Z" fill="#f0a02e"/><path d="M2.1,10.6 L11.8,.9" stroke="#f8c877" stroke-width=".9"/><path d="M3.3,12 L13,2.3" stroke="#de8d22" stroke-width=".8"/><path d="M10.7,1.3 L11.4,.6 L13.4,2.6 L12.7,3.3Z" fill="#e58c3a"/></svg><svg style="left:83.8px;top:2.4px" width="15" height="15.4" viewBox="0 0 16 16" preserveAspectRatio="none"><defs><linearGradient id="pg10" x1="0" y1="0" x2="0" y2="1"><stop offset="0" stop-color="#f4f5f8"/><stop offset=".55" stop-color="#d6d9e0"/><stop offset="1" stop-color="#a9aeb8"/></linearGradient></defs><path d="M4,.6 H11.6 L12.6,5.2 H3Z" fill="#f4f4f7" stroke="#c2c5cc" stroke-width=".7"/><rect x=".6" y="4.8" width="14.6" height="7.6" rx="1.4" fill="url(#pg10)" stroke="#9da2ac" stroke-width=".6"/><rect x=".8" y="11" width="14.2" height="1.5" fill="#6f747d" opacity=".75"/><path d="M3.6,9.8 H12 L12.8,14.9 H2.8Z" fill="#fafafc" stroke="#b1b5bd" stroke-width=".7"/><rect x="3.2" y="9.2" width="9.4" height="1" fill="#8d929b"/><rect x="12.4" y="6.4" width="1.5" height="2.2" fill="#b7c04a"/><rect x="12.4" y="6.4" width="1.5" height="1" fill="#7aa6d6"/></svg><span class="c ra" style="left:105px;width:52.5px">76</span><span class="c" style="left:171.0px">UC-0014</span><span class="c" style="left:281.5px">Guardanapo</span><span class="c ra" style="left:498px;width:64px">1,00</span><svg style="left:569.2px;top:2.6px" width="16" height="16" viewBox="0 0 16 16"><path d="M.9,14.8 L5.6,10.2" stroke="#9b9b9b" stroke-width="1.5"/><path d="M.7,15 L1.9,13.8" stroke="#555" stroke-width="1.3"/><path d="M3.1,6.9 Q5.6,6.4 7.3,6.6 L9.7,.9 L14.6,5.6 L9.2,8.4 Q9.6,10.4 9,12.7Z" fill="#dc3a3c" stroke="#a81f22" stroke-width=".7" stroke-linejoin="round"/><path d="M4.6,7.6 Q6.4,7.1 7.9,7.4 L10.2,2.6" fill="none" stroke="#f08a8a" stroke-width="1"/></svg><span class="c" style="left:596px;width:31px;text-align:center">un</span><span class="c" style="left:632.5px">22/12/23</span><svg style="left:688.2px;top:2.6px" width="16" height="16" viewBox="0 0 16 16"><path d="M.9,14.8 L5.6,10.2" stroke="#9b9b9b" stroke-width="1.5"/><path d="M.7,15 L1.9,13.8" stroke="#555" stroke-width="1.3"/><path d="M3.1,6.9 Q5.6,6.4 7.3,6.6 L9.7,.9 L14.6,5.6 L9.2,8.4 Q9.6,10.4 9,12.7Z" fill="#dc3a3c" stroke="#a81f22" stroke-width=".7" stroke-linejoin="round"/><path d="M4.6,7.6 Q6.4,7.1 7.9,7.4 L10.2,2.6" fill="none" stroke="#f08a8a" stroke-width="1"/></svg><span class="c" style="left:722.0px">A produzir</span><span class="c ra" style="left:793px;width:60px">0,00</span><span class="c ra" style="left:863px;width:59.799999999999955px">1,00</span></div>
<div class="r alt" style="top:235.07px"><i class="cb"></i><svg style="left:42.3px;top:8.2px" width="7" height="7" viewBox="0 0 7 7"><path d="M1.1,1.1 L5.9,5.9 M5.9,1.1 L1.1,5.9" stroke="#c3161c" stroke-width="2.1"/></svg><svg style="left:55.7px;top:2.8px" width="14" height="14" viewBox="0 0 14 14"><path d="M.5,13.5 L1.6,10.4 L3.6,12.4Z" fill="#f3d9ad"/><path d="M.5,13.5 L.95,12.3 L1.7,13.05Z" fill="#333"/><path d="M1.6,10.4 L11.4,.6 L13.4,2.6 L3.6,12.4Z" fill="#f0a02e"/><path d="M2.1,10.6 L11.8,.9" stroke="#f8c877" stroke-width=".9"/><path d="M3.3,12 L13,2.3" stroke="#de8d22" stroke-width=".8"/><path d="M10.7,1.3 L11.4,.6 L13.4,2.6 L12.7,3.3Z" fill="#e58c3a"/></svg><svg style="left:83.8px;top:2.4px" width="15" height="15.4" viewBox="0 0 16 16" preserveAspectRatio="none"><defs><linearGradient id="pg11" x1="0" y1="0" x2="0" y2="1"><stop offset="0" stop-color="#f4f5f8"/><stop offset=".55" stop-color="#d6d9e0"/><stop offset="1" stop-color="#a9aeb8"/></linearGradient></defs><path d="M4,.6 H11.6 L12.6,5.2 H3Z" fill="#f4f4f7" stroke="#c2c5cc" stroke-width=".7"/><rect x=".6" y="4.8" width="14.6" height="7.6" rx="1.4" fill="url(#pg11)" stroke="#9da2ac" stroke-width=".6"/><rect x=".8" y="11" width="14.2" height="1.5" fill="#6f747d" opacity=".75"/><path d="M3.6,9.8 H12 L12.8,14.9 H2.8Z" fill="#fafafc" stroke="#b1b5bd" stroke-width=".7"/><rect x="3.2" y="9.2" width="9.4" height="1" fill="#8d929b"/><rect x="12.4" y="6.4" width="1.5" height="2.2" fill="#b7c04a"/><rect x="12.4" y="6.4" width="1.5" height="1" fill="#7aa6d6"/></svg><span class="c ra" style="left:105px;width:52.5px">74</span><span class="c" style="left:171.0px">00002</span><span class="c" style="left:281.5px">Chapa de MDP - 3 camadas 4 x 2</span><span class="c ra" style="left:498px;width:64px">10,00</span><svg style="left:569.2px;top:2.6px" width="16" height="16" viewBox="0 0 16 16"><path d="M.9,14.8 L5.6,10.2" stroke="#9b9b9b" stroke-width="1.5"/><path d="M.7,15 L1.9,13.8" stroke="#555" stroke-width="1.3"/><path d="M3.1,6.9 Q5.6,6.4 7.3,6.6 L9.7,.9 L14.6,5.6 L9.2,8.4 Q9.6,10.4 9,12.7Z" fill="#dc3a3c" stroke="#a81f22" stroke-width=".7" stroke-linejoin="round"/><path d="M4.6,7.6 Q6.4,7.1 7.9,7.4 L10.2,2.6" fill="none" stroke="#f08a8a" stroke-width="1"/></svg><span class="c" style="left:596px;width:31px;text-align:center">un</span><span class="c" style="left:632.5px">20/12/23</span><svg style="left:688.2px;top:2.6px" width="16" height="16" viewBox="0 0 16 16"><path d="M.9,14.8 L5.6,10.2" stroke="#9b9b9b" stroke-width="1.5"/><path d="M.7,15 L1.9,13.8" stroke="#555" stroke-width="1.3"/><path d="M3.1,6.9 Q5.6,6.4 7.3,6.6 L9.7,.9 L14.6,5.6 L9.2,8.4 Q9.6,10.4 9,12.7Z" fill="#dc3a3c" stroke="#a81f22" stroke-width=".7" stroke-linejoin="round"/><path d="M4.6,7.6 Q6.4,7.1 7.9,7.4 L10.2,2.6" fill="none" stroke="#f08a8a" stroke-width="1"/></svg><span class="c" style="left:722.0px">A produzir</span><span class="c ra" style="left:793px;width:60px">0,00</span><span class="c ra" style="left:863px;width:59.799999999999955px">10,00</span></div>
<div class="r" style="top:256.40px"><i class="cb"></i><svg style="left:42.3px;top:8.2px" width="7" height="7" viewBox="0 0 7 7"><path d="M1.1,1.1 L5.9,5.9 M5.9,1.1 L1.1,5.9" stroke="#c3161c" stroke-width="2.1"/></svg><svg style="left:55.7px;top:2.8px" width="14" height="14" viewBox="0 0 14 14"><path d="M.5,13.5 L1.6,10.4 L3.6,12.4Z" fill="#f3d9ad"/><path d="M.5,13.5 L.95,12.3 L1.7,13.05Z" fill="#333"/><path d="M1.6,10.4 L11.4,.6 L13.4,2.6 L3.6,12.4Z" fill="#f0a02e"/><path d="M2.1,10.6 L11.8,.9" stroke="#f8c877" stroke-width=".9"/><path d="M3.3,12 L13,2.3" stroke="#de8d22" stroke-width=".8"/><path d="M10.7,1.3 L11.4,.6 L13.4,2.6 L12.7,3.3Z" fill="#e58c3a"/></svg><svg style="left:83.8px;top:2.4px" width="15" height="15.4" viewBox="0 0 16 16" preserveAspectRatio="none"><defs><linearGradient id="pg12" x1="0" y1="0" x2="0" y2="1"><stop offset="0" stop-color="#f4f5f8"/><stop offset=".55" stop-color="#d6d9e0"/><stop offset="1" stop-color="#a9aeb8"/></linearGradient></defs><path d="M4,.6 H11.6 L12.6,5.2 H3Z" fill="#f4f4f7" stroke="#c2c5cc" stroke-width=".7"/><rect x=".6" y="4.8" width="14.6" height="7.6" rx="1.4" fill="url(#pg12)" stroke="#9da2ac" stroke-width=".6"/><rect x=".8" y="11" width="14.2" height="1.5" fill="#6f747d" opacity=".75"/><path d="M3.6,9.8 H12 L12.8,14.9 H2.8Z" fill="#fafafc" stroke="#b1b5bd" stroke-width=".7"/><rect x="3.2" y="9.2" width="9.4" height="1" fill="#8d929b"/><rect x="12.4" y="6.4" width="1.5" height="2.2" fill="#b7c04a"/><rect x="12.4" y="6.4" width="1.5" height="1" fill="#7aa6d6"/></svg><span class="c ra" style="left:105px;width:52.5px">73</span><span class="c" style="left:171.0px">PDT-0002</span><span class="c" style="left:281.5px">Mesa de Jantar Linha Itália 2.00 x 1....</span><span class="c ra" style="left:498px;width:64px">10,00</span><svg style="left:569.2px;top:2.6px" width="16" height="16" viewBox="0 0 16 16"><path d="M.9,14.8 L5.6,10.2" stroke="#9b9b9b" stroke-width="1.5"/><path d="M.7,15 L1.9,13.8" stroke="#555" stroke-width="1.3"/><path d="M3.1,6.9 Q5.6,6.4 7.3,6.6 L9.7,.9 L14.6,5.6 L9.2,8.4 Q9.6,10.4 9,12.7Z" fill="#dc3a3c" stroke="#a81f22" stroke-width=".7" stroke-linejoin="round"/><path d="M4.6,7.6 Q6.4,7.1 7.9,7.4 L10.2,2.6" fill="none" stroke="#f08a8a" stroke-width="1"/></svg><span class="c" style="left:596px;width:31px;text-align:center">un</span><span class="c" style="left:632.5px">22/12/23</span><svg style="left:688.2px;top:2.6px" width="16" height="16" viewBox="0 0 16 16"><path d="M.9,14.8 L5.6,10.2" stroke="#9b9b9b" stroke-width="1.5"/><path d="M.7,15 L1.9,13.8" stroke="#555" stroke-width="1.3"/><path d="M3.1,6.9 Q5.6,6.4 7.3,6.6 L9.7,.9 L14.6,5.6 L9.2,8.4 Q9.6,10.4 9,12.7Z" fill="#dc3a3c" stroke="#a81f22" stroke-width=".7" stroke-linejoin="round"/><path d="M4.6,7.6 Q6.4,7.1 7.9,7.4 L10.2,2.6" fill="none" stroke="#f08a8a" stroke-width="1"/></svg><span class="c" style="left:722.0px">A produzir</span><span class="c ra" style="left:793px;width:60px">0,00</span><span class="c ra" style="left:863px;width:59.799999999999955px">10,00</span><span class="c" style="left:937px;top:0;height:21px;display:flex;gap:3px;align-items:flex-start"><span class="chip b" style="position:relative">4563 #1 (10) Aco Engenharia</span></span></div>
<div class="r alt" style="top:277.73px"><i class="cb"></i><svg style="left:42.3px;top:8.2px" width="7" height="7" viewBox="0 0 7 7"><path d="M1.1,1.1 L5.9,5.9 M5.9,1.1 L1.1,5.9" stroke="#c3161c" stroke-width="2.1"/></svg><svg style="left:55.7px;top:2.8px" width="14" height="14" viewBox="0 0 14 14"><path d="M.5,13.5 L1.6,10.4 L3.6,12.4Z" fill="#f3d9ad"/><path d="M.5,13.5 L.95,12.3 L1.7,13.05Z" fill="#333"/><path d="M1.6,10.4 L11.4,.6 L13.4,2.6 L3.6,12.4Z" fill="#f0a02e"/><path d="M2.1,10.6 L11.8,.9" stroke="#f8c877" stroke-width=".9"/><path d="M3.3,12 L13,2.3" stroke="#de8d22" stroke-width=".8"/><path d="M10.7,1.3 L11.4,.6 L13.4,2.6 L12.7,3.3Z" fill="#e58c3a"/></svg><svg style="left:83.8px;top:2.4px" width="15" height="15.4" viewBox="0 0 16 16" preserveAspectRatio="none"><defs><linearGradient id="pg13" x1="0" y1="0" x2="0" y2="1"><stop offset="0" stop-color="#f4f5f8"/><stop offset=".55" stop-color="#d6d9e0"/><stop offset="1" stop-color="#a9aeb8"/></linearGradient></defs><path d="M4,.6 H11.6 L12.6,5.2 H3Z" fill="#f4f4f7" stroke="#c2c5cc" stroke-width=".7"/><rect x=".6" y="4.8" width="14.6" height="7.6" rx="1.4" fill="url(#pg13)" stroke="#9da2ac" stroke-width=".6"/><rect x=".8" y="11" width="14.2" height="1.5" fill="#6f747d" opacity=".75"/><path d="M3.6,9.8 H12 L12.8,14.9 H2.8Z" fill="#fafafc" stroke="#b1b5bd" stroke-width=".7"/><rect x="3.2" y="9.2" width="9.4" height="1" fill="#8d929b"/><rect x="12.4" y="6.4" width="1.5" height="2.2" fill="#b7c04a"/><rect x="12.4" y="6.4" width="1.5" height="1" fill="#7aa6d6"/></svg><span class="c ra" style="left:105px;width:52.5px">72</span><span class="c" style="left:171.0px">INS-501</span><span class="c" style="left:281.5px">Tampo Para Mesa 100x60 bs</span><span class="c ra" style="left:498px;width:64px">10,00</span><svg style="left:569.2px;top:2.6px" width="16" height="16" viewBox="0 0 16 16"><path d="M.9,14.8 L5.6,10.2" stroke="#9b9b9b" stroke-width="1.5"/><path d="M.7,15 L1.9,13.8" stroke="#555" stroke-width="1.3"/><path d="M3.1,6.9 Q5.6,6.4 7.3,6.6 L9.7,.9 L14.6,5.6 L9.2,8.4 Q9.6,10.4 9,12.7Z" fill="#dc3a3c" stroke="#a81f22" stroke-width=".7" stroke-linejoin="round"/><path d="M4.6,7.6 Q6.4,7.1 7.9,7.4 L10.2,2.6" fill="none" stroke="#f08a8a" stroke-width="1"/></svg><span class="c" style="left:596px;width:31px;text-align:center">un</span><span class="c" style="left:632.5px">22/12/23</span><svg style="left:688.2px;top:2.6px" width="16" height="16" viewBox="0 0 16 16"><path d="M.9,14.8 L5.6,10.2" stroke="#9b9b9b" stroke-width="1.5"/><path d="M.7,15 L1.9,13.8" stroke="#555" stroke-width="1.3"/><path d="M3.1,6.9 Q5.6,6.4 7.3,6.6 L9.7,.9 L14.6,5.6 L9.2,8.4 Q9.6,10.4 9,12.7Z" fill="#dc3a3c" stroke="#a81f22" stroke-width=".7" stroke-linejoin="round"/><path d="M4.6,7.6 Q6.4,7.1 7.9,7.4 L10.2,2.6" fill="none" stroke="#f08a8a" stroke-width="1"/></svg><span class="c" style="left:722.0px">A produzir</span><span class="c ra" style="left:793px;width:60px">0,00</span><span class="c ra" style="left:863px;width:59.799999999999955px">10,00</span><span class="c" style="left:937px;top:0;height:21px;display:flex;gap:3px;align-items:flex-start"><span class="chip b" style="position:relative">4563 #1 (10) Aco Engenharia</span></span></div>
<div class="r" style="top:299.07px"><i class="cb"></i><svg style="left:42.3px;top:8.2px" width="7" height="7" viewBox="0 0 7 7"><path d="M1.1,1.1 L5.9,5.9 M5.9,1.1 L1.1,5.9" stroke="#c3161c" stroke-width="2.1"/></svg><svg style="left:55.7px;top:2.8px" width="14" height="14" viewBox="0 0 14 14"><path d="M.5,13.5 L1.6,10.4 L3.6,12.4Z" fill="#f3d9ad"/><path d="M.5,13.5 L.95,12.3 L1.7,13.05Z" fill="#333"/><path d="M1.6,10.4 L11.4,.6 L13.4,2.6 L3.6,12.4Z" fill="#f0a02e"/><path d="M2.1,10.6 L11.8,.9" stroke="#f8c877" stroke-width=".9"/><path d="M3.3,12 L13,2.3" stroke="#de8d22" stroke-width=".8"/><path d="M10.7,1.3 L11.4,.6 L13.4,2.6 L12.7,3.3Z" fill="#e58c3a"/></svg><svg style="left:83.8px;top:2.4px" width="15" height="15.4" viewBox="0 0 16 16" preserveAspectRatio="none"><defs><linearGradient id="pg14" x1="0" y1="0" x2="0" y2="1"><stop offset="0" stop-color="#f4f5f8"/><stop offset=".55" stop-color="#d6d9e0"/><stop offset="1" stop-color="#a9aeb8"/></linearGradient></defs><path d="M4,.6 H11.6 L12.6,5.2 H3Z" fill="#f4f4f7" stroke="#c2c5cc" stroke-width=".7"/><rect x=".6" y="4.8" width="14.6" height="7.6" rx="1.4" fill="url(#pg14)" stroke="#9da2ac" stroke-width=".6"/><rect x=".8" y="11" width="14.2" height="1.5" fill="#6f747d" opacity=".75"/><path d="M3.6,9.8 H12 L12.8,14.9 H2.8Z" fill="#fafafc" stroke="#b1b5bd" stroke-width=".7"/><rect x="3.2" y="9.2" width="9.4" height="1" fill="#8d929b"/><rect x="12.4" y="6.4" width="1.5" height="2.2" fill="#b7c04a"/><rect x="12.4" y="6.4" width="1.5" height="1" fill="#7aa6d6"/></svg><span class="c ra" style="left:105px;width:52.5px">71</span><span class="c" style="left:171.0px">00002</span><span class="c" style="left:281.5px">Chapa de MDP - 3 camadas 4 x 2</span><span class="c ra" style="left:498px;width:64px">1,00</span><svg style="left:569.2px;top:2.6px" width="16" height="16" viewBox="0 0 16 16"><path d="M.9,14.8 L5.6,10.2" stroke="#9b9b9b" stroke-width="1.5"/><path d="M.7,15 L1.9,13.8" stroke="#555" stroke-width="1.3"/><path d="M3.1,6.9 Q5.6,6.4 7.3,6.6 L9.7,.9 L14.6,5.6 L9.2,8.4 Q9.6,10.4 9,12.7Z" fill="#dc3a3c" stroke="#a81f22" stroke-width=".7" stroke-linejoin="round"/><path d="M4.6,7.6 Q6.4,7.1 7.9,7.4 L10.2,2.6" fill="none" stroke="#f08a8a" stroke-width="1"/></svg><span class="c" style="left:596px;width:31px;text-align:center">un</span><span class="c" style="left:632.5px">28/12/23</span><svg style="left:688.2px;top:2.6px" width="16" height="16" viewBox="0 0 16 16"><path d="M.9,14.8 L5.6,10.2" stroke="#9b9b9b" stroke-width="1.5"/><path d="M.7,15 L1.9,13.8" stroke="#555" stroke-width="1.3"/><path d="M3.1,6.9 Q5.6,6.4 7.3,6.6 L9.7,.9 L14.6,5.6 L9.2,8.4 Q9.6,10.4 9,12.7Z" fill="#dc3a3c" stroke="#a81f22" stroke-width=".7" stroke-linejoin="round"/><path d="M4.6,7.6 Q6.4,7.1 7.9,7.4 L10.2,2.6" fill="none" stroke="#f08a8a" stroke-width="1"/></svg><span class="c" style="left:722.0px">A produzir</span><span class="c ra" style="left:793px;width:60px">0,00</span><span class="c ra" style="left:863px;width:59.799999999999955px">1,00</span></div>
<div class="r alt" style="top:320.40px"><i class="cb"></i><svg style="left:42.3px;top:8.2px" width="7" height="7" viewBox="0 0 7 7"><path d="M1.1,1.1 L5.9,5.9 M5.9,1.1 L1.1,5.9" stroke="#c3161c" stroke-width="2.1"/></svg><svg style="left:55.7px;top:2.8px" width="14" height="14" viewBox="0 0 14 14"><path d="M.5,13.5 L1.6,10.4 L3.6,12.4Z" fill="#f3d9ad"/><path d="M.5,13.5 L.95,12.3 L1.7,13.05Z" fill="#333"/><path d="M1.6,10.4 L11.4,.6 L13.4,2.6 L3.6,12.4Z" fill="#f0a02e"/><path d="M2.1,10.6 L11.8,.9" stroke="#f8c877" stroke-width=".9"/><path d="M3.3,12 L13,2.3" stroke="#de8d22" stroke-width=".8"/><path d="M10.7,1.3 L11.4,.6 L13.4,2.6 L12.7,3.3Z" fill="#e58c3a"/></svg><svg style="left:83.8px;top:2.4px" width="15" height="15.4" viewBox="0 0 16 16" preserveAspectRatio="none"><defs><linearGradient id="pg15" x1="0" y1="0" x2="0" y2="1"><stop offset="0" stop-color="#f4f5f8"/><stop offset=".55" stop-color="#d6d9e0"/><stop offset="1" stop-color="#a9aeb8"/></linearGradient></defs><path d="M4,.6 H11.6 L12.6,5.2 H3Z" fill="#f4f4f7" stroke="#c2c5cc" stroke-width=".7"/><rect x=".6" y="4.8" width="14.6" height="7.6" rx="1.4" fill="url(#pg15)" stroke="#9da2ac" stroke-width=".6"/><rect x=".8" y="11" width="14.2" height="1.5" fill="#6f747d" opacity=".75"/><path d="M3.6,9.8 H12 L12.8,14.9 H2.8Z" fill="#fafafc" stroke="#b1b5bd" stroke-width=".7"/><rect x="3.2" y="9.2" width="9.4" height="1" fill="#8d929b"/><rect x="12.4" y="6.4" width="1.5" height="2.2" fill="#b7c04a"/><rect x="12.4" y="6.4" width="1.5" height="1" fill="#7aa6d6"/></svg><span class="c ra" style="left:105px;width:52.5px">69</span><span class="c" style="left:171.0px">00001</span><span class="c" style="left:281.5px">Painel de fibra de madeira e resina 4...</span><span class="c ra" style="left:498px;width:64px">10,00</span><svg style="left:569.2px;top:2.6px" width="16" height="16" viewBox="0 0 16 16"><path d="M.9,14.8 L5.6,10.2" stroke="#9b9b9b" stroke-width="1.5"/><path d="M.7,15 L1.9,13.8" stroke="#555" stroke-width="1.3"/><path d="M3.1,6.9 Q5.6,6.4 7.3,6.6 L9.7,.9 L14.6,5.6 L9.2,8.4 Q9.6,10.4 9,12.7Z" fill="#dc3a3c" stroke="#a81f22" stroke-width=".7" stroke-linejoin="round"/><path d="M4.6,7.6 Q6.4,7.1 7.9,7.4 L10.2,2.6" fill="none" stroke="#f08a8a" stroke-width="1"/></svg><span class="c" style="left:596px;width:31px;text-align:center">un</span><span class="c" style="left:632.5px">30/11/23</span><svg style="left:688.2px;top:2.6px" width="16" height="16" viewBox="0 0 16 16"><path d="M.9,14.8 L5.6,10.2" stroke="#9b9b9b" stroke-width="1.5"/><path d="M.7,15 L1.9,13.8" stroke="#555" stroke-width="1.3"/><path d="M3.1,6.9 Q5.6,6.4 7.3,6.6 L9.7,.9 L14.6,5.6 L9.2,8.4 Q9.6,10.4 9,12.7Z" fill="#dc3a3c" stroke="#a81f22" stroke-width=".7" stroke-linejoin="round"/><path d="M4.6,7.6 Q6.4,7.1 7.9,7.4 L10.2,2.6" fill="none" stroke="#f08a8a" stroke-width="1"/></svg><span class="c" style="left:722.0px">A produzir</span><span class="c ra" style="left:793px;width:60px">0,00</span><span class="c ra" style="left:863px;width:59.799999999999955px">10,00</span><span class="c" style="left:937px;top:0;height:21px;display:flex;gap:3px;align-items:flex-start"><span class="chip b" style="position:relative">101 #1 (5) Cargotec</span><span class="chip b" style="position:relative;letter-spacing:.16px">31 #1 (5) Conaprole - Distr...</span></span></div>
<div class="r" style="top:341.73px"><i class="cb"></i><svg style="left:42.3px;top:8.2px" width="7" height="7" viewBox="0 0 7 7"><path d="M1.1,1.1 L5.9,5.9 M5.9,1.1 L1.1,5.9" stroke="#c3161c" stroke-width="2.1"/></svg><svg style="left:55.7px;top:2.8px" width="14" height="14" viewBox="0 0 14 14"><path d="M.5,13.5 L1.6,10.4 L3.6,12.4Z" fill="#f3d9ad"/><path d="M.5,13.5 L.95,12.3 L1.7,13.05Z" fill="#333"/><path d="M1.6,10.4 L11.4,.6 L13.4,2.6 L3.6,12.4Z" fill="#f0a02e"/><path d="M2.1,10.6 L11.8,.9" stroke="#f8c877" stroke-width=".9"/><path d="M3.3,12 L13,2.3" stroke="#de8d22" stroke-width=".8"/><path d="M10.7,1.3 L11.4,.6 L13.4,2.6 L12.7,3.3Z" fill="#e58c3a"/></svg><svg style="left:83.8px;top:2.4px" width="15" height="15.4" viewBox="0 0 16 16" preserveAspectRatio="none"><defs><linearGradient id="pg16" x1="0" y1="0" x2="0" y2="1"><stop offset="0" stop-color="#f4f5f8"/><stop offset=".55" stop-color="#d6d9e0"/><stop offset="1" stop-color="#a9aeb8"/></linearGradient></defs><path d="M4,.6 H11.6 L12.6,5.2 H3Z" fill="#f4f4f7" stroke="#c2c5cc" stroke-width=".7"/><rect x=".6" y="4.8" width="14.6" height="7.6" rx="1.4" fill="url(#pg16)" stroke="#9da2ac" stroke-width=".6"/><rect x=".8" y="11" width="14.2" height="1.5" fill="#6f747d" opacity=".75"/><path d="M3.6,9.8 H12 L12.8,14.9 H2.8Z" fill="#fafafc" stroke="#b1b5bd" stroke-width=".7"/><rect x="3.2" y="9.2" width="9.4" height="1" fill="#8d929b"/><rect x="12.4" y="6.4" width="1.5" height="2.2" fill="#b7c04a"/><rect x="12.4" y="6.4" width="1.5" height="1" fill="#7aa6d6"/></svg><span class="c ra" style="left:105px;width:52.5px">68</span><span class="c" style="left:171.0px">UC-0002</span><span class="c" style="left:281.5px">Graxa tipo B</span><span class="c ra" style="left:498px;width:64px">120,00</span><svg style="left:569.2px;top:2.6px" width="16" height="16" viewBox="0 0 16 16"><path d="M.9,14.8 L5.6,10.2" stroke="#9b9b9b" stroke-width="1.5"/><path d="M.7,15 L1.9,13.8" stroke="#555" stroke-width="1.3"/><path d="M3.1,6.9 Q5.6,6.4 7.3,6.6 L9.7,.9 L14.6,5.6 L9.2,8.4 Q9.6,10.4 9,12.7Z" fill="#dc3a3c" stroke="#a81f22" stroke-width=".7" stroke-linejoin="round"/><path d="M4.6,7.6 Q6.4,7.1 7.9,7.4 L10.2,2.6" fill="none" stroke="#f08a8a" stroke-width="1"/></svg><span class="c" style="left:596px;width:31px;text-align:center">un</span><span class="c" style="left:632.5px">24/11/23</span><svg style="left:688.2px;top:2.6px" width="16" height="16" viewBox="0 0 16 16"><path d="M.9,14.8 L5.6,10.2" stroke="#9b9b9b" stroke-width="1.5"/><path d="M.7,15 L1.9,13.8" stroke="#555" stroke-width="1.3"/><path d="M3.1,6.9 Q5.6,6.4 7.3,6.6 L9.7,.9 L14.6,5.6 L9.2,8.4 Q9.6,10.4 9,12.7Z" fill="#dc3a3c" stroke="#a81f22" stroke-width=".7" stroke-linejoin="round"/><path d="M4.6,7.6 Q6.4,7.1 7.9,7.4 L10.2,2.6" fill="none" stroke="#f08a8a" stroke-width="1"/></svg><span class="c" style="left:722.0px">A produzir</span><span class="c ra" style="left:793px;width:60px">0,00</span><span class="c ra" style="left:863px;width:59.799999999999955px">120,00</span></div>
<div class="r alt" style="top:363.07px"><i class="cb"></i><svg style="left:42.3px;top:8.2px" width="7" height="7" viewBox="0 0 7 7"><path d="M1.1,1.1 L5.9,5.9 M5.9,1.1 L1.1,5.9" stroke="#c3161c" stroke-width="2.1"/></svg><svg style="left:55.7px;top:2.8px" width="14" height="14" viewBox="0 0 14 14"><path d="M.5,13.5 L1.6,10.4 L3.6,12.4Z" fill="#f3d9ad"/><path d="M.5,13.5 L.95,12.3 L1.7,13.05Z" fill="#333"/><path d="M1.6,10.4 L11.4,.6 L13.4,2.6 L3.6,12.4Z" fill="#f0a02e"/><path d="M2.1,10.6 L11.8,.9" stroke="#f8c877" stroke-width=".9"/><path d="M3.3,12 L13,2.3" stroke="#de8d22" stroke-width=".8"/><path d="M10.7,1.3 L11.4,.6 L13.4,2.6 L12.7,3.3Z" fill="#e58c3a"/></svg><svg style="left:83.8px;top:2.4px" width="15" height="15.4" viewBox="0 0 16 16" preserveAspectRatio="none"><defs><linearGradient id="pg17" x1="0" y1="0" x2="0" y2="1"><stop offset="0" stop-color="#f4f5f8"/><stop offset=".55" stop-color="#d6d9e0"/><stop offset="1" stop-color="#a9aeb8"/></linearGradient></defs><path d="M4,.6 H11.6 L12.6,5.2 H3Z" fill="#f4f4f7" stroke="#c2c5cc" stroke-width=".7"/><rect x=".6" y="4.8" width="14.6" height="7.6" rx="1.4" fill="url(#pg17)" stroke="#9da2ac" stroke-width=".6"/><rect x=".8" y="11" width="14.2" height="1.5" fill="#6f747d" opacity=".75"/><path d="M3.6,9.8 H12 L12.8,14.9 H2.8Z" fill="#fafafc" stroke="#b1b5bd" stroke-width=".7"/><rect x="3.2" y="9.2" width="9.4" height="1" fill="#8d929b"/><rect x="12.4" y="6.4" width="1.5" height="2.2" fill="#b7c04a"/><rect x="12.4" y="6.4" width="1.5" height="1" fill="#7aa6d6"/></svg><span class="c ra" style="left:105px;width:52.5px">67</span><span class="c" style="left:171.0px">UC-0007</span><span class="c" style="left:281.5px">Graxa tipo B / Caixa com 24 un</span><span class="c ra" style="left:498px;width:64px">4,00</span><svg style="left:569.2px;top:2.6px" width="16" height="16" viewBox="0 0 16 16"><path d="M.9,14.8 L5.6,10.2" stroke="#9b9b9b" stroke-width="1.5"/><path d="M.7,15 L1.9,13.8" stroke="#555" stroke-width="1.3"/><path d="M3.1,6.9 Q5.6,6.4 7.3,6.6 L9.7,.9 L14.6,5.6 L9.2,8.4 Q9.6,10.4 9,12.7Z" fill="#dc3a3c" stroke="#a81f22" stroke-width=".7" stroke-linejoin="round"/><path d="M4.6,7.6 Q6.4,7.1 7.9,7.4 L10.2,2.6" fill="none" stroke="#f08a8a" stroke-width="1"/></svg><span class="c" style="left:596px;width:31px;text-align:center">CX</span><span class="c" style="left:632.5px">17/11/23</span><svg style="left:688.2px;top:2.6px" width="16" height="16" viewBox="0 0 16 16"><path d="M.9,14.8 L5.6,10.2" stroke="#9b9b9b" stroke-width="1.5"/><path d="M.7,15 L1.9,13.8" stroke="#555" stroke-width="1.3"/><path d="M3.1,6.9 Q5.6,6.4 7.3,6.6 L9.7,.9 L14.6,5.6 L9.2,8.4 Q9.6,10.4 9,12.7Z" fill="#dc3a3c" stroke="#a81f22" stroke-width=".7" stroke-linejoin="round"/><path d="M4.6,7.6 Q6.4,7.1 7.9,7.4 L10.2,2.6" fill="none" stroke="#f08a8a" stroke-width="1"/></svg><span class="c" style="left:722.0px">A produzir</span><span class="c ra" style="left:793px;width:60px">0,00</span><span class="c ra" style="left:863px;width:59.799999999999955px">4,00</span></div>
<div class="r" style="top:384.40px"><i class="cb"></i><svg style="left:42.3px;top:8.2px" width="7" height="7" viewBox="0 0 7 7"><path d="M1.1,1.1 L5.9,5.9 M5.9,1.1 L1.1,5.9" stroke="#c3161c" stroke-width="2.1"/></svg><svg style="left:55.7px;top:2.8px" width="14" height="14" viewBox="0 0 14 14"><path d="M.5,13.5 L1.6,10.4 L3.6,12.4Z" fill="#f3d9ad"/><path d="M.5,13.5 L.95,12.3 L1.7,13.05Z" fill="#333"/><path d="M1.6,10.4 L11.4,.6 L13.4,2.6 L3.6,12.4Z" fill="#f0a02e"/><path d="M2.1,10.6 L11.8,.9" stroke="#f8c877" stroke-width=".9"/><path d="M3.3,12 L13,2.3" stroke="#de8d22" stroke-width=".8"/><path d="M10.7,1.3 L11.4,.6 L13.4,2.6 L12.7,3.3Z" fill="#e58c3a"/></svg><svg style="left:83.8px;top:2.4px" width="15" height="15.4" viewBox="0 0 16 16" preserveAspectRatio="none"><defs><linearGradient id="pg18" x1="0" y1="0" x2="0" y2="1"><stop offset="0" stop-color="#f4f5f8"/><stop offset=".55" stop-color="#d6d9e0"/><stop offset="1" stop-color="#a9aeb8"/></linearGradient></defs><path d="M4,.6 H11.6 L12.6,5.2 H3Z" fill="#f4f4f7" stroke="#c2c5cc" stroke-width=".7"/><rect x=".6" y="4.8" width="14.6" height="7.6" rx="1.4" fill="url(#pg18)" stroke="#9da2ac" stroke-width=".6"/><rect x=".8" y="11" width="14.2" height="1.5" fill="#6f747d" opacity=".75"/><path d="M3.6,9.8 H12 L12.8,14.9 H2.8Z" fill="#fafafc" stroke="#b1b5bd" stroke-width=".7"/><rect x="3.2" y="9.2" width="9.4" height="1" fill="#8d929b"/><rect x="12.4" y="6.4" width="1.5" height="2.2" fill="#b7c04a"/><rect x="12.4" y="6.4" width="1.5" height="1" fill="#7aa6d6"/></svg><span class="c ra" style="left:105px;width:52.5px">65</span><span class="c" style="left:171.0px">PE-0001</span><span class="c" style="left:281.5px">Kit 4 Pés De Madeira Palito Retro Par...</span><span class="c ra" style="left:498px;width:64px">22,00</span><svg style="left:569.2px;top:2.6px" width="16" height="16" viewBox="0 0 16 16"><path d="M.9,14.8 L5.6,10.2" stroke="#9b9b9b" stroke-width="1.5"/><path d="M.7,15 L1.9,13.8" stroke="#555" stroke-width="1.3"/><path d="M3.1,6.9 Q5.6,6.4 7.3,6.6 L9.7,.9 L14.6,5.6 L9.2,8.4 Q9.6,10.4 9,12.7Z" fill="#dc3a3c" stroke="#a81f22" stroke-width=".7" stroke-linejoin="round"/><path d="M4.6,7.6 Q6.4,7.1 7.9,7.4 L10.2,2.6" fill="none" stroke="#f08a8a" stroke-width="1"/></svg><span class="c" style="left:596px;width:31px;text-align:center">un</span><span class="c" style="left:632.5px">04/09/23</span><svg style="left:688.2px;top:2.6px" width="16" height="16" viewBox="0 0 16 16"><path d="M.9,14.8 L5.6,10.2" stroke="#9b9b9b" stroke-width="1.5"/><path d="M.7,15 L1.9,13.8" stroke="#555" stroke-width="1.3"/><path d="M3.1,6.9 Q5.6,6.4 7.3,6.6 L9.7,.9 L14.6,5.6 L9.2,8.4 Q9.6,10.4 9,12.7Z" fill="#dc3a3c" stroke="#a81f22" stroke-width=".7" stroke-linejoin="round"/><path d="M4.6,7.6 Q6.4,7.1 7.9,7.4 L10.2,2.6" fill="none" stroke="#f08a8a" stroke-width="1"/></svg><span class="c" style="left:722.0px">A produzir</span><span class="c ra" style="left:793px;width:60px">0,00</span><span class="c ra" style="left:863px;width:59.799999999999955px">22,00</span></div>
</div>
<div id="vscroll"><i class="arw" style="left:5px;top:7px;border-left-width:3.7px;border-right-width:3.7px;border-top:none;border-bottom:4px solid #a3a3a3"></i><i class="abs" style="left:2px;top:17px;width:13px;height:139px;background:#c1c1c1"></i><i class="arw" style="left:5px;top:393px;border-left-width:3.7px;border-right-width:3.7px;border-top:4px solid #404040"></i></div>
<div id="hscroll"><i class="abs" style="left:6px;top:5px;width:0;height:0;border-top:3.6px solid transparent;border-bottom:3.6px solid transparent;border-right:4px solid #a3a3a3"></i><i class="abs" style="left:1325px;top:5px;width:0;height:0;border-top:3.6px solid transparent;border-bottom:3.6px solid transparent;border-left:4px solid #a3a3a3"></i><i class="abs" style="left:1336px;top:0;width:16px;height:17px;background:#dcdcdc"></i></div>
<svg class="abs" style="left:375.5px;top:364.5px" width="14" height="21" viewBox="0 0 14 21"><path d="M1,1 V16.6 L4.6,13.2 L7.2,19.4 L9.6,18.4 L7,12.4 H12Z" fill="#fff" stroke="#111" stroke-width="1.1" stroke-linejoin="round"/></svg>
</body></html>
